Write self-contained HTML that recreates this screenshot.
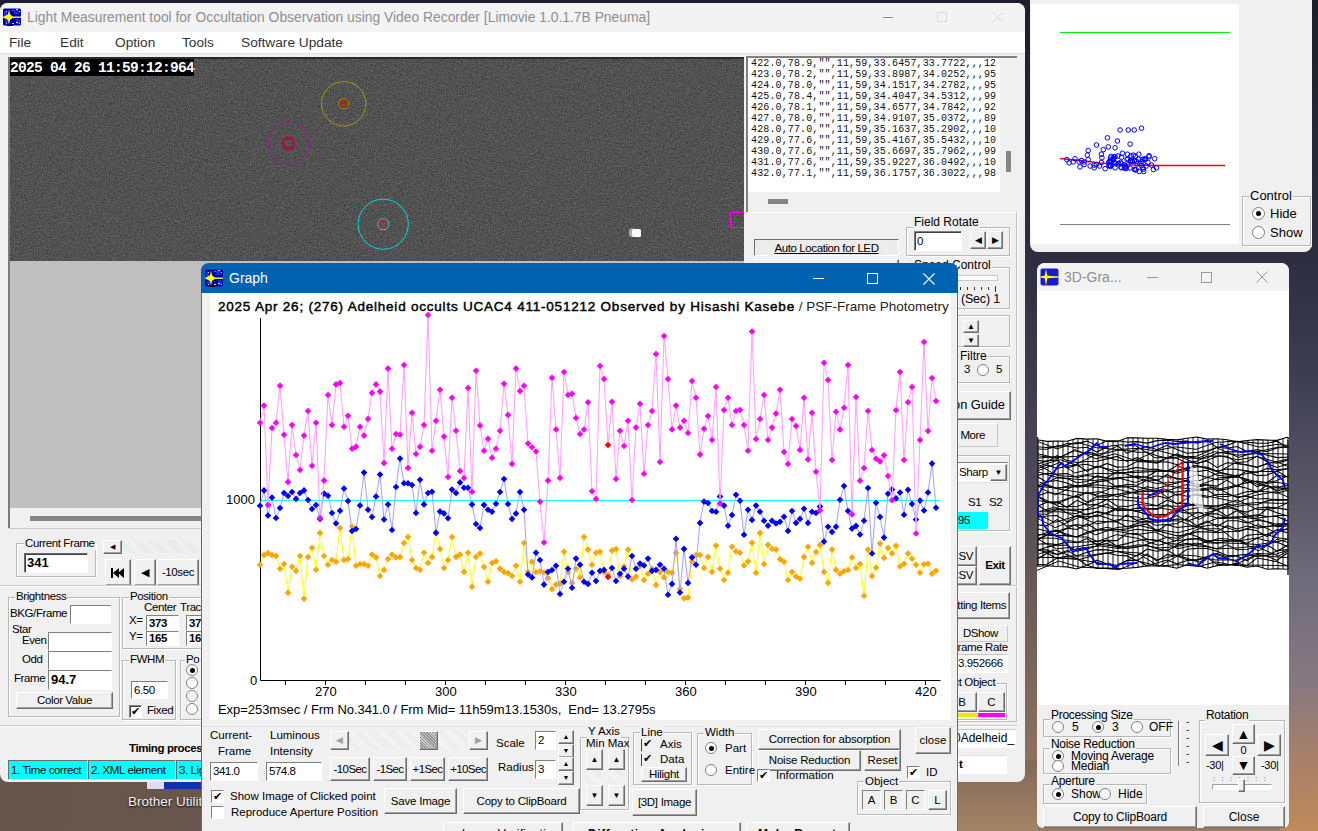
<!DOCTYPE html>
<html><head><meta charset="utf-8">
<style>
*{margin:0;padding:0;box-sizing:border-box}
html,body{width:1318px;height:831px;overflow:hidden}
body{position:relative;font-family:"Liberation Sans",sans-serif;font-size:12px;color:#000;
background:linear-gradient(180deg,#1d1d2b 0%,#2c2c3e 30%,#4a4556 55%,#7a6558 80%,#9a7a60 100%)}
.a{position:absolute}
.win{position:absolute;background:#f0f0f0;overflow:hidden}
.tb{position:absolute;left:0;right:0;top:0;background:#f3f3f3}
.ttl{position:absolute;font-size:14px;color:#8a8a8a;white-space:nowrap}
.grp{position:absolute;border:1px solid #b8b8b8;box-shadow:inset 1px 1px 0 #fff,1px 1px 0 #fff}
.gl{position:absolute;background:#f0f0f0;padding:0 1px;font-size:12px;white-space:nowrap;line-height:13px}
.btn{position:absolute;background:#f0f0f0;border:1px solid;border-color:#fff #6d6d6d #6d6d6d #fff;box-shadow:inset -1px -1px 0 #a0a0a0;text-align:center;white-space:nowrap;font-size:12px}
.ed{position:absolute;background:#fff;border:1px solid;border-color:#808080 #fff #fff #808080;box-shadow:inset 1px 1px 0 #404040;white-space:nowrap;overflow:hidden;padding-left:2px}
.t{position:absolute;white-space:nowrap;line-height:1}
.cb{position:absolute;width:13px;height:13px;background:#fff;border:1px solid;border-color:#808080 #fff #fff #808080;box-shadow:inset 1px 1px 0 #404040}
.rd{position:absolute;width:12px;height:12px;border-radius:50%;background:#fff;border:1px solid #808080}
.rd.on::after{content:"";position:absolute;left:2.5px;top:2.5px;width:5px;height:5px;border-radius:50%;background:#000}
.cyan{background:#00ffff}
</style></head>
<body>
<!-- desktop bits -->
<div class="a" style="left:0;top:770px;width:1040px;height:61px;background:linear-gradient(90deg,#66544c,#6e5a50 50%,#8a7060)"></div>
<div class="a" style="left:958px;top:760px;width:80px;height:71px;background:linear-gradient(180deg,#806858,#a58465)"></div>

<div class="a" style="left:1280px;top:240px;width:38px;height:591px;background:linear-gradient(180deg,#2c2c3e 0px,#3c3a4e 120px,#5a5868 260px,#6c6a7a 330px,#867880 440px,#a88068 520px,#c08a58 591px)"></div>
<div class="a" style="left:1025px;top:0;width:293px;height:263px;background:linear-gradient(180deg,#1e1e2c,#2e2e40)"></div>
<!-- MAIN WINDOW -->
<div class="win" id="main" style="left:0;top:3px;width:1025px;height:779px;border-radius:8px"></div>
<div class="a" style="left:0;top:3px;width:1025px;height:29px;background:#f3f3f3;border-radius:8px 8px 0 0"></div>
<svg class="a" style="left:3px;top:8px" width="19" height="19" viewBox="0 0 19 19"><rect x="0" y="0.5" width="18" height="17" rx="1.5" fill="#0000a8"/><rect x="1" y="3" width="3" height="5" fill="#1a30f0"/><rect x="11" y="2" width="5" height="4" fill="#1028e0"/><rect x="2" y="12" width="4" height="3" fill="#1a30f0"/><rect x="13" y="11" width="4" height="5" fill="#1028e0"/><rect x="3" y="3" width="1" height="1" fill="#ddd"/><rect x="9.5" y="2" width="1" height="1" fill="#ddd"/><rect x="13" y="1" width="2" height="1" fill="#ddd"/><rect x="16" y="3" width="1" height="1" fill="#ddd"/><rect x="3" y="15" width="1" height="1" fill="#ddd"/><rect x="9" y="15" width="2" height="1" fill="#ddd"/><rect x="13" y="14" width="2" height="1" fill="#ddd"/><rect x="16" y="15" width="1" height="1" fill="#ddd"/><rect x="4" y="17" width="6" height="1" fill="#000"/><path d="M6 1.5L7 6.3L9.8 8.4L18 8.6V9.8L9.8 10L7 12L6 16.5L5 12L1 10L0 9.8V8.6L1 8.4L5 6.3Z" fill="#ffff00"/></svg>
<div class="t" style="left:27px;top:11px;font-size:13.85px;color:#8f8f8f">Light Measurement tool for Occultation Observation using Video Recorder [Limovie 1.0.1.7B Pneuma]</div>
<div class="a" style="left:883px;top:17px;width:10px;height:1px;background:#909090"></div>
<div class="a" style="left:937px;top:12px;width:10px;height:10px;border:1px solid #d8d8d8"></div>
<svg class="a" style="left:992px;top:12px" width="11" height="11"><path d="M0.5 0.5L10.5 10.5M10.5 0.5L0.5 10.5" stroke="#dcdcdc" stroke-width="1"/></svg>
<div class="a" style="left:0;top:32px;width:1025px;height:21px;background:#fff"></div>
<div class="t" style="left:9px;top:36px;font-size:13.7px;color:#333">File</div>
<div class="t" style="left:60px;top:36px;font-size:13.7px;color:#333">Edit</div>
<div class="t" style="left:115px;top:36px;font-size:13.7px;color:#333">Option</div>
<div class="t" style="left:182px;top:36px;font-size:13.7px;color:#333">Tools</div>
<div class="t" style="left:241px;top:36px;font-size:13.7px;color:#333">Software Update</div>
<div class="a" style="left:0;top:53px;width:1025px;height:1px;background:#e0e0e0"></div>
<!-- video -->
<svg class="a" style="left:9px;top:57px" width="735" height="205">
 <filter id="nz" x="0" y="0" width="100%" height="100%" color-interpolation-filters="sRGB"><feTurbulence type="fractalNoise" baseFrequency="0.75" numOctaves="2" seed="5"/><feColorMatrix type="matrix" values="0.34 0 0 0 0.15  0.34 0 0 0 0.15  0.34 0 0 0 0.15  0 0 0 0 1"/></filter>
 <rect width="735" height="205" fill="#4e4e4e"/>
 <rect width="735" height="205" fill="#fff" filter="url(#nz)"/>
 <rect x="0" y="0" width="735" height="2" fill="#2a2a2a"/>
 <rect x="1" y="2" width="184" height="17" fill="#000"/>
 <circle cx="334.7" cy="46.8" r="22.2" fill="none" stroke="#a09a00" stroke-width="1"/>
 <circle cx="334.7" cy="46.8" r="5" fill="none" stroke="#a09a00" stroke-width="1"/>
 <circle cx="334.7" cy="46.8" r="3.6" fill="none" stroke="#b01818" stroke-width="1.5"/>
 <circle cx="279.4" cy="86.1" r="20.6" fill="none" stroke="#9a189a" stroke-width="1"/>
 <circle cx="279.4" cy="86.1" r="6.6" fill="none" stroke="#a01880" stroke-width="1"/>
 <circle cx="279.4" cy="86.1" r="5.4" fill="none" stroke="#c00020" stroke-width="1.5"/>
 <circle cx="374.2" cy="167.2" r="25.1" fill="none" stroke="#00d8e0" stroke-width="1"/>
 <circle cx="374.2" cy="167.2" r="5.6" fill="none" stroke="#00d8e0" stroke-width="1"/>
 <circle cx="374.2" cy="167.2" r="4.2" fill="none" stroke="#ff1010" stroke-width="1.3"/>
 <rect x="620" y="171.5" width="7" height="8" rx="2" fill="#aaa"/>
 <rect x="623" y="172" width="9" height="8" rx="1.5" fill="#f8f8f8"/>
 <rect x="721.5" y="155.5" width="14" height="15" fill="none" stroke="#ff00ff" stroke-width="1"/>
</svg>
<div class="t" style="left:10px;top:60px;font:bold 14.5px 'Liberation Mono',monospace;letter-spacing:-0.7px;color:#fff">2025 04 26 11:59:12:964</div>
<!-- gray area below video -->
<div class="a" style="left:9px;top:261px;width:735px;height:247px;background:linear-gradient(90deg,#c0c0c0,#bdbdbd 60%,#c2c2c2)"></div>
<div class="a" style="left:8px;top:57px;width:2px;height:471px;background:#7a7a7a"></div>
<div class="a" style="left:9px;top:528px;width:735px;height:1px;background:#c8c8c8"></div>
<div class="a" style="left:30px;top:516px;width:714px;height:5px;background:#858585"></div>
<!-- log -->
<div class="a" style="left:746px;top:56px;width:271px;height:156px;border-left:2px solid #808080;border-top:2px solid #808080;background:#f0f0f0"></div>
<div class="a" style="left:748px;top:58px;width:252px;height:134px;background:#fff"></div>
<div class="t" style="left:751px;top:57px;padding-top:1px;font:10px/11px 'Liberation Mono',monospace;letter-spacing:0.13px;color:#111;width:246px;overflow:hidden">422.0,78.9,&quot;&quot;,11,59,33.6457,33.7722,,,12<br>423.0,78.2,&quot;&quot;,11,59,33.8987,34.0252,,,95<br>424.0,78.0,&quot;&quot;,11,59,34.1517,34.2782,,,95<br>425.0,78.4,&quot;&quot;,11,59,34.4047,34.5312,,,99<br>426.0,78.1,&quot;&quot;,11,59,34.6577,34.7842,,,92<br>427.0,78.0,&quot;&quot;,11,59,34.9107,35.0372,,,89<br>428.0,77.0,&quot;&quot;,11,59,35.1637,35.2902,,,10<br>429.0,77.6,&quot;&quot;,11,59,35.4167,35.5432,,,10<br>430.0,77.6,&quot;&quot;,11,59,35.6697,35.7962,,,99<br>431.0,77.6,&quot;&quot;,11,59,35.9227,36.0492,,,10<br>432.0,77.1,&quot;&quot;,11,59,36.1757,36.3022,,,98</div>
<div class="a" style="left:1006px;top:151px;width:5px;height:21px;background:#858585"></div>
<div class="a" style="left:768px;top:199px;width:20px;height:5px;background:#858585"></div>
<!-- right control panel -->
<div class="a" style="left:747px;top:212px;width:271px;height:1px;background:#fff"></div>
<div class="a" style="left:1016px;top:212px;width:1px;height:509px;background:#c0c0c0"></div><div class="a" style="left:1017px;top:212px;width:1px;height:509px;background:#fff"></div><div class="a" style="left:900px;top:721px;width:117px;height:1px;background:#c0c0c0"></div>
<div class="btn" style="left:754px;top:239px;width:145px;height:17px;border-color:#6d6d6d #fff #fff #6d6d6d;box-shadow:none;background:repeating-linear-gradient(45deg,#f0f0f0 0 1px,#e8e8e8 1px 2px)"><span style="position:relative;top:1px;text-decoration:underline;font-size:11.5px;letter-spacing:-0.4px">Auto Location for LED</span></div>
<div class="btn" style="left:754px;top:259px;width:145px;height:10px"></div>
<div class="grp" style="left:906px;top:227px;width:104px;height:29px"></div>
<div class="gl" style="left:913px;top:216px">Field Rotate</div>
<div class="ed" style="left:914px;top:231px;width:48px;height:20px;font-size:11.5px;letter-spacing:-0.4px;line-height:18px">0</div>
<div class="btn" style="left:970px;top:231px;width:16px;height:18px;font-size:9px;line-height:16px">&#9664;</div>
<div class="btn" style="left:987px;top:231px;width:16px;height:18px;font-size:9px;line-height:16px">&#9654;</div>
<div class="grp" style="left:906px;top:267px;width:104px;height:42px"></div>
<div class="gl" style="left:913px;top:259px">Speed Control</div>
<div class="a" style="left:918px;top:275px;width:80px;height:6px;background:#fff;border:1px solid #c8c8c8"></div>
<svg class="a" style="left:915px;top:286px" width="85" height="8"><path d="M3.5 1v3M10.5 1v3M17.5 1v3M24.5 1v3M31.5 1v3M38.5 1v3M45.5 1v3M52.5 1v3M59.5 1v3M66.5 1v3M73.5 1v3M80.5 0v6" stroke="#333" stroke-width="1"/></svg>
<div class="t" style="left:961px;top:293px;font-size:12.5px;letter-spacing:-0.2px">(Sec) 1</div>
<div class="grp" style="left:906px;top:315px;width:104px;height:32px"></div>
<div class="btn" style="left:963px;top:320px;width:16px;height:13px;font-size:8px;line-height:11px">&#9650;</div>
<div class="btn" style="left:963px;top:334px;width:16px;height:13px;font-size:8px;line-height:11px">&#9660;</div>
<div class="grp" style="left:906px;top:356px;width:104px;height:27px"></div>
<div class="gl" style="left:959px;top:350px">Filtre</div>
<div class="t" style="left:964px;top:364px;font-size:11.5px;letter-spacing:-0.4px">3</div>
<div class="rd" style="left:977px;top:364px"></div>
<div class="t" style="left:996px;top:364px;font-size:11.5px;letter-spacing:-0.4px">5</div>
<div class="btn" style="left:906px;top:391px;width:105px;height:29px;font-size:12.8px;line-height:26px;text-align:right;padding-right:5px">Location Guide</div>
<div class="btn" style="left:906px;top:423px;width:92px;height:24px;font-size:11.5px;letter-spacing:-0.4px;line-height:22px;text-align:right;padding-right:12px;border-color:#fff #c8c8c8 #c8c8c8 #fff;box-shadow:none">More</div>
<div class="grp" style="left:906px;top:455px;width:104px;height:76px"></div>
<div class="ed" style="left:930px;top:462px;width:78px;height:21px;font-size:11.5px;letter-spacing:-0.4px;line-height:19px;padding-left:28px;box-shadow:none;border-color:#808080 #e0e0e0 #e0e0e0 #808080">Sharp</div>
<div class="btn" style="left:990px;top:464px;width:17px;height:17px;font-size:8px;line-height:15px">&#9660;</div>
<div class="t" style="left:968px;top:497px;font-size:11.5px;letter-spacing:-0.4px">S1</div>
<div class="t" style="left:989px;top:497px;font-size:11.5px;letter-spacing:-0.4px">S2</div>
<div class="a" style="left:930px;top:512px;width:58px;height:17px;background:#00ffff;font-size:11.5px;letter-spacing:-0.4px;line-height:17px;padding-left:28px">95</div>
<div class="btn" style="left:920px;top:546px;width:57px;height:20px;font-size:11.5px;letter-spacing:-0.4px;line-height:18px;text-align:right;padding-right:3px">CSV</div>
<div class="btn" style="left:920px;top:566px;width:57px;height:19px;font-size:11.5px;letter-spacing:-0.4px;line-height:17px;text-align:right;padding-right:3px">CSV</div>
<div class="btn" style="left:979px;top:546px;width:32px;height:39px;font-weight:bold;font-size:11.5px;letter-spacing:-0.4px;line-height:37px">Exit</div>
<div class="btn" style="left:906px;top:592px;width:104px;height:27px;font-size:11.5px;letter-spacing:-0.4px;line-height:25px;text-align:right;padding-right:3px">Setting Items</div>
<div class="btn" style="left:906px;top:625px;width:102px;height:17px;font-size:11.5px;letter-spacing:-0.4px;line-height:15px;text-align:right;padding-right:9px;border-color:#fff #c8c8c8 #c8c8c8 #fff;box-shadow:none">DShow</div>
<div class="t" style="left:951px;top:642px;font-size:11.5px;letter-spacing:-0.4px">Frame Rate</div>
<div class="ed" style="left:906px;top:654px;width:102px;height:19px;font-size:11.5px;letter-spacing:-0.4px;line-height:17px;padding-left:51px;box-shadow:none;border-color:#c8c8c8 #fff #fff #c8c8c8">3.952666</div>
<div class="grp" style="left:906px;top:683px;width:101px;height:37px"></div>
<div class="gl" style="left:931px;top:676px;font-size:11.5px;letter-spacing:-0.4px">Select Object</div>
<div class="btn" style="left:940px;top:692px;width:37px;height:20px;font-size:11.5px;line-height:18px;text-align:right;padding-right:10px">B</div>
<div class="btn" style="left:978px;top:692px;width:27px;height:20px;font-size:11.5px;line-height:18px">C</div>
<div class="a" style="left:940px;top:713px;width:37px;height:4px;background:#e8e800"></div>
<div class="a" style="left:978px;top:713px;width:27px;height:4px;background:#ff00ff"></div>
<div class="ed" style="left:900px;top:729px;width:116px;height:19px;font-size:12px;line-height:17px;padding-left:53px;box-shadow:none;border-color:#c8c8c8 #fff #fff #c8c8c8">0Adelheid_</div>
<div class="ed" style="left:900px;top:755px;width:107px;height:19px;font-weight:bold;font-size:11.5px;letter-spacing:-0.4px;line-height:17px;padding-left:58px;box-shadow:none;border-color:#e0e0e0 #fff #fff #e0e0e0">t</div>
<!-- left bottom -->
<div class="grp" style="left:16px;top:543px;width:80px;height:34px"></div>
<div class="gl" style="left:24px;top:537px;font-size:11.5px;letter-spacing:-0.4px">Current Frame</div>
<div class="ed" style="left:24px;top:553px;width:64px;height:20px;font-weight:bold;font-size:13px;line-height:18px;border-color:#6a6a6a #fff #fff #6a6a6a">341</div>
<div class="a" style="left:103px;top:540px;width:100px;height:13px;background:repeating-linear-gradient(45deg,#f4f4f4 0 1px,#e6e6e6 1px 2px)"></div>
<div class="btn" style="left:103px;top:540px;width:19px;height:14px;font-size:7px;line-height:12px">&#9664;</div>
<div class="btn" style="left:105px;top:559px;width:26px;height:27px"><svg style="position:absolute;left:5px;top:8px" width="14" height="10"><path d="M0 0h2v10h-2z M2 5L8 0V10Z M7 5L13 0V10Z" fill="#000"/></svg></div>
<div class="btn" style="left:134px;top:559px;width:22px;height:27px;font-size:11px;line-height:25px">&#9664;</div>
<div class="btn" style="left:157px;top:559px;width:42px;height:27px;font-size:11.5px;letter-spacing:-0.4px;line-height:25px">-10sec</div>
<div class="a" style="left:0;top:585px;width:1017px;height:1px;background:#c8c8c8"></div>
<div class="a" style="left:0;top:586px;width:1017px;height:1px;background:#fff"></div>
<div class="grp" style="left:8px;top:597px;width:112px;height:120px"></div>
<div class="gl" style="left:15px;top:590px;font-size:11.5px;letter-spacing:-0.4px">Brightness</div>
<div class="t" style="left:10px;top:608px;font-size:11.5px;letter-spacing:-0.4px">BKG/Frame</div>
<div class="ed" style="left:70px;top:605px;width:41px;height:19px;box-shadow:none;border-color:#808080 #fff #fff #808080"></div>
<div class="t" style="left:12px;top:624px;font-size:11.5px;letter-spacing:-0.4px">Star</div>
<div class="t" style="left:22px;top:635px;font-size:11.5px;letter-spacing:-0.4px">Even</div>
<div class="ed" style="left:48px;top:632px;width:64px;height:19px;box-shadow:none;border-color:#808080 #fff #fff #808080"></div>
<div class="t" style="left:22px;top:654px;font-size:11.5px;letter-spacing:-0.4px">Odd</div>
<div class="ed" style="left:48px;top:651px;width:64px;height:19px;box-shadow:none;border-color:#808080 #fff #fff #808080"></div>
<div class="t" style="left:14px;top:673px;font-size:11.5px;letter-spacing:-0.4px">Frame</div>
<div class="ed" style="left:48px;top:670px;width:64px;height:20px;font-weight:bold;font-size:13px;line-height:18px;box-shadow:none;border-color:#808080 #fff #fff #808080">94.7</div>
<div class="btn" style="left:16px;top:692px;width:97px;height:17px;font-size:11.5px;letter-spacing:-0.4px;line-height:15px">Color Value</div>
<div class="grp" style="left:122px;top:597px;width:100px;height:52px"></div>
<div class="gl" style="left:129px;top:590px;font-size:11.5px;letter-spacing:-0.4px">Position</div>
<div class="t" style="left:144px;top:602px;font-size:11.5px;letter-spacing:-0.4px">Center</div>
<div class="t" style="left:180px;top:602px;font-size:11.5px;letter-spacing:-0.4px">Tracking</div>
<div class="t" style="left:129px;top:615px;font-size:11.5px;letter-spacing:-0.4px">X=</div>
<div class="t" style="left:129px;top:631px;font-size:11.5px;letter-spacing:-0.4px">Y=</div>
<div class="ed" style="left:146px;top:615px;width:33px;height:16px;font-weight:bold;font-size:11.5px;letter-spacing:-0.4px;line-height:14px;box-shadow:none;border-color:#808080 #fff #fff #808080">373</div>
<div class="ed" style="left:146px;top:631px;width:33px;height:15px;font-weight:bold;font-size:11.5px;letter-spacing:-0.4px;line-height:13px;box-shadow:none;border-color:#808080 #fff #fff #808080">165</div>
<div class="ed" style="left:186px;top:615px;width:33px;height:16px;font-weight:bold;font-size:11.5px;letter-spacing:-0.4px;line-height:14px;box-shadow:none;border-color:#808080 #fff #fff #808080">373</div>
<div class="ed" style="left:186px;top:631px;width:33px;height:15px;font-weight:bold;font-size:11.5px;letter-spacing:-0.4px;line-height:13px;box-shadow:none;border-color:#808080 #fff #fff #808080">165</div>
<div class="grp" style="left:122px;top:660px;width:54px;height:60px"></div>
<div class="gl" style="left:129px;top:653px;font-size:11.5px;letter-spacing:-0.4px">FWHM</div>
<div class="ed" style="left:131px;top:681px;width:37px;height:18px;font-size:11.5px;letter-spacing:-0.4px;line-height:16px;box-shadow:none;border-color:#808080 #fff #fff #808080">6.50</div>
<div class="cb" style="left:129px;top:705px;font-size:11px;line-height:10px;text-align:center">&#10004;</div>
<div class="t" style="left:147px;top:705px;font-size:11.5px;letter-spacing:-0.4px">Fixed</div>
<div class="grp" style="left:180px;top:660px;width:40px;height:60px"></div>
<div class="gl" style="left:185px;top:653px;font-size:11.5px;letter-spacing:-0.4px">Po</div>
<div class="rd on" style="left:186px;top:664px"></div>
<div class="rd" style="left:186px;top:677px"></div>
<div class="rd" style="left:186px;top:690px"></div>
<div class="rd" style="left:186px;top:703px"></div>
<div class="a" style="left:0;top:725px;width:1017px;height:1px;background:#c8c8c8"></div>
<div class="a" style="left:0;top:726px;width:1017px;height:1px;background:#fff"></div>
<div class="t" style="left:129px;top:743px;font-size:11.5px;letter-spacing:-0.4px;font-weight:bold">Timing process</div>
<div class="btn cyan" style="left:8px;top:760px;width:80px;height:20px;font-size:11.5px;letter-spacing:-0.4px;line-height:18px;text-align:left;padding-left:2px;border-color:#6d6d6d #fff #fff #6d6d6d;box-shadow:none">1. Time correct</div>
<div class="btn cyan" style="left:88px;top:760px;width:88px;height:20px;font-size:11.5px;letter-spacing:-0.4px;line-height:18px;text-align:left;padding-left:2px;border-color:#6d6d6d #fff #fff #6d6d6d;box-shadow:none">2. XML element</div>
<div class="btn cyan" style="left:176px;top:760px;width:60px;height:20px;font-size:11.5px;letter-spacing:-0.4px;line-height:18px;text-align:left;padding-left:2px;border-color:#6d6d6d #fff #fff #6d6d6d;box-shadow:none">3. Light</div>
<div class="t" style="left:128px;top:795px;font-size:13.5px;color:#f0f0f0;text-shadow:0 1px 2px #000">Brother Utilities</div>
<div class="a" style="left:147px;top:782px;width:20px;height:7px;background:#dde"></div>
<div class="a" style="left:164px;top:782px;width:40px;height:7px;background:#1030b0"></div>

<!-- MINI WINDOW -->
<div class="a" style="left:1030px;top:-10px;width:282px;height:262px;background:#f0f0f0;border-radius:8px"></div>
<div class="a" style="left:1031px;top:4px;width:208px;height:240px;background:#fff"></div>
<svg class="a" style="left:1031px;top:4px" width="208" height="240" viewBox="1031 4 208 240"><path d="M1060 32.5H1230" stroke="#00f400" stroke-width="1.2"/><polyline points="1060,158.5 1080,160.5 1100,163 1130,165 1160,165.5 1225,165.5" fill="none" stroke="#ff0000" stroke-width="1.3"/><path d="M1060 224.5H1230" stroke="#808080" stroke-width="1"/><g fill="none" stroke="#0000ff" stroke-width="1"><circle cx="1066.8" cy="159.6" r="2.3"/><circle cx="1069.1" cy="162.8" r="2.3"/><circle cx="1073.2" cy="161.9" r="2.3"/><circle cx="1075.0" cy="158.7" r="2.3"/><circle cx="1079.1" cy="161.9" r="2.3"/><circle cx="1080.0" cy="166.9" r="2.3"/><circle cx="1081.4" cy="160.5" r="2.3"/><circle cx="1084.1" cy="164.6" r="2.3"/><circle cx="1084.1" cy="161.9" r="2.3"/><circle cx="1087.3" cy="155.1" r="2.3"/><circle cx="1088.2" cy="150.5" r="2.3"/><circle cx="1088.2" cy="159.6" r="2.3"/><circle cx="1090.1" cy="166.0" r="2.3"/><circle cx="1094.2" cy="167.8" r="2.3"/><circle cx="1094.2" cy="165.1" r="2.3"/><circle cx="1096.4" cy="145.0" r="2.3"/><circle cx="1096.4" cy="164.6" r="2.3"/><circle cx="1099.6" cy="166.0" r="2.3"/><circle cx="1101.4" cy="154.2" r="2.3"/><circle cx="1101.9" cy="157.8" r="2.3"/><circle cx="1101.4" cy="162.4" r="2.3"/><circle cx="1103.3" cy="149.6" r="2.3"/><circle cx="1105.1" cy="168.7" r="2.3"/><circle cx="1107.4" cy="137.8" r="2.3"/><circle cx="1108.3" cy="146.9" r="2.3"/><circle cx="1108.7" cy="165.5" r="2.3"/><circle cx="1110.6" cy="160.5" r="2.3"/><circle cx="1113.3" cy="159.6" r="2.3"/><circle cx="1114.2" cy="162.4" r="2.3"/><circle cx="1115.1" cy="147.8" r="2.3"/><circle cx="1115.1" cy="167.8" r="2.3"/><circle cx="1117.4" cy="141.0" r="2.3"/><circle cx="1117.8" cy="156.0" r="2.3"/><circle cx="1120.1" cy="130.0" r="2.3"/><circle cx="1120.6" cy="162.4" r="2.3"/><circle cx="1121.5" cy="167.8" r="2.3"/><circle cx="1122.4" cy="153.3" r="2.3"/><circle cx="1124.2" cy="165.1" r="2.3"/><circle cx="1126.0" cy="168.7" r="2.3"/><circle cx="1127.4" cy="154.2" r="2.3"/><circle cx="1127.9" cy="158.7" r="2.3"/><circle cx="1128.3" cy="130.0" r="2.3"/><circle cx="1130.1" cy="144.1" r="2.3"/><circle cx="1130.6" cy="161.4" r="2.3"/><circle cx="1133.3" cy="155.1" r="2.3"/><circle cx="1134.2" cy="130.0" r="2.3"/><circle cx="1134.2" cy="160.5" r="2.3"/><circle cx="1136.1" cy="169.6" r="2.3"/><circle cx="1138.8" cy="154.2" r="2.3"/><circle cx="1139.2" cy="171.5" r="2.3"/><circle cx="1141.5" cy="128.2" r="2.3"/><circle cx="1142.0" cy="161.4" r="2.3"/><circle cx="1142.9" cy="167.8" r="2.3"/><circle cx="1143.8" cy="171.5" r="2.3"/><circle cx="1145.2" cy="158.7" r="2.3"/><circle cx="1146.1" cy="166.0" r="2.3"/><circle cx="1148.0" cy="162.4" r="2.3"/><circle cx="1151.5" cy="165.1" r="2.3"/><circle cx="1153.4" cy="169.6" r="2.3"/><circle cx="1154.7" cy="158.7" r="2.3"/><circle cx="1156.5" cy="167.8" r="2.3"/><circle cx="1121.6" cy="157.3" r="2.3"/><circle cx="1135.3" cy="156.1" r="2.3"/><circle cx="1130.5" cy="160.5" r="2.3"/><circle cx="1110.4" cy="162.6" r="2.3"/><circle cx="1109.6" cy="161.5" r="2.3"/><circle cx="1110.9" cy="156.4" r="2.3"/><circle cx="1125.8" cy="167.4" r="2.3"/><circle cx="1113.2" cy="158.3" r="2.3"/><circle cx="1134.4" cy="169.2" r="2.3"/><circle cx="1132.2" cy="161.0" r="2.3"/><circle cx="1149.0" cy="155.7" r="2.3"/><circle cx="1144.1" cy="159.3" r="2.3"/><circle cx="1114.1" cy="156.8" r="2.3"/><circle cx="1121.0" cy="167.2" r="2.3"/><circle cx="1115.6" cy="163.7" r="2.3"/><circle cx="1134.8" cy="160.6" r="2.3"/><circle cx="1131.0" cy="155.9" r="2.3"/><circle cx="1110.5" cy="158.1" r="2.3"/><circle cx="1136.6" cy="161.4" r="2.3"/><circle cx="1121.2" cy="163.8" r="2.3"/><circle cx="1127.0" cy="159.5" r="2.3"/><circle cx="1141.4" cy="165.5" r="2.3"/><circle cx="1118.3" cy="163.6" r="2.3"/><circle cx="1130.1" cy="168.1" r="2.3"/><circle cx="1138.6" cy="159.3" r="2.3"/><circle cx="1149.2" cy="156.8" r="2.3"/><circle cx="1125.6" cy="166.4" r="2.3"/><circle cx="1114.4" cy="162.3" r="2.3"/><circle cx="1109.6" cy="165.0" r="2.3"/><circle cx="1140.1" cy="163.6" r="2.3"/><circle cx="1144.8" cy="159.7" r="2.3"/><circle cx="1137.2" cy="163.9" r="2.3"/><circle cx="1132.4" cy="161.8" r="2.3"/><circle cx="1143.3" cy="169.2" r="2.3"/><circle cx="1127.9" cy="165.0" r="2.3"/><circle cx="1110.5" cy="165.5" r="2.3"/><circle cx="1135.2" cy="169.9" r="2.3"/><circle cx="1142.5" cy="159.3" r="2.3"/><circle cx="1124.2" cy="165.0" r="2.3"/><circle cx="1108.9" cy="161.9" r="2.3"/><circle cx="1115.1" cy="156.8" r="2.3"/><circle cx="1110.5" cy="166.5" r="2.3"/><circle cx="1113.4" cy="158.7" r="2.3"/><circle cx="1124.4" cy="168.1" r="2.3"/><circle cx="1111.4" cy="161.7" r="2.3"/></g></svg>
<div class="grp" style="left:1242px;top:196px;width:69px;height:50px"></div>
<div class="gl" style="left:1249px;top:189px;font-size:13px">Control</div>
<div class="rd on" style="left:1252px;top:207px;width:13px;height:13px"></div>
<div class="t" style="left:1270px;top:207px;font-size:13px">Hide</div>
<div class="rd" style="left:1252px;top:226px;width:13px;height:13px"></div>
<div class="t" style="left:1270px;top:226px;font-size:13px">Show</div>

<!-- 3D WINDOW -->
<div class="a" style="left:1037px;top:263px;width:252px;height:565px;background:#f0f0f0;border-radius:8px 8px 6px 6px"></div>
<div class="a" style="left:1037px;top:263px;width:252px;height:28px;background:#f3f3f3;border-radius:8px 8px 0 0"></div>
<svg class="a" style="left:1040px;top:268px" width="19" height="19" viewBox="0 0 19 19"><rect x="0.5" y="0.5" width="18" height="17" rx="2" fill="#1a1ad0"/><path d="M6 1 L7.2 7.5 L18 9 L7.2 10.5 L6 18 L4.8 10.5 L0.5 9 L4.8 7.5Z" fill="#ffff00"/><rect x="0.5" y="8.3" width="18" height="1.4" fill="#ffff00"/></svg>
<div class="t" style="left:1064px;top:270px;font-size:14px;color:#8f8f8f">3D-Gra...</div>
<div class="a" style="left:1147px;top:277px;width:11px;height:1px;background:#999"></div>
<div class="a" style="left:1201px;top:272px;width:11px;height:11px;border:1px solid #999"></div>
<svg class="a" style="left:1256px;top:271px" width="12" height="12"><path d="M0.5 0.5L11.5 11.5M11.5 0.5L0.5 11.5" stroke="#999" stroke-width="1"/></svg>
<div class="a" style="left:1037px;top:291px;width:252px;height:414px;background:#fff"></div>
<svg class="a" style="left:1037px;top:291px" width="252" height="414" viewBox="1037 291 252 414"><path d="M1038 439.9V566.3M1043 440.7V565.9M1048 441.4V565.7M1053 441.2V566.2M1058 441.1V566.6M1063 441.2V566.7M1068 441.0V567.1M1073 439.6V568.2M1078 438.5V568.7M1083 438.8V566.8M1088 439.0V565.6M1093 438.9V567.2M1098 439.1V568.4M1103 440.4V568.2M1108 441.5V568.1M1113 441.6V568.3M1118 441.4V568.5M1123 439.4V568.4M1128 437.8V568.2M1133 437.8V567.8M1138 437.9V567.3M1143 438.0V566.6M1148 438.2V566.0M1153 438.2V566.0M1158 438.3V566.0M1163 438.9V566.1M1168 439.5V566.4M1173 439.7V567.5M1178 439.8V568.0M1183 439.0V566.2M1188 438.2V564.9M1193 437.5V565.1M1198 437.2V565.7M1203 438.3V567.1M1208 439.1V567.9M1213 438.9V566.6M1218 438.9V565.5M1223 439.4V565.1M1228 440.0V564.7M1233 441.0V564.6M1238 441.6V564.8M1243 441.0V566.1M1248 440.4V567.0M1253 439.9V566.5M1258 439.6V566.4M1263 439.9V568.0M1268 440.1V569.3M1273 440.3V569.0M1278 440.1V568.9M1283 438.5V569.1M1288 437.7V569.0" stroke="#555" stroke-width="1.4"/><polyline points="1037,439.7 1047,441.4 1057,441.1 1067,441.3 1077,438.4 1087,439.1 1097,438.8 1107,441.4 1117,441.8 1127,437.8 1137,437.9 1147,438.2 1157,438.2 1167,439.4 1177,439.9 1187,438.3 1197,437.0 1207,439.1 1217,438.8 1227,439.8 1237,441.8 1247,440.5 1257,439.6 1267,440.1 1277,440.4 1287,437.3 1297,441.5" fill="none" stroke="#000" stroke-width="1.1"/><polyline points="1037,446.8 1047,447.5 1057,446.9 1067,443.5 1077,443.6 1087,441.1 1097,445.5 1107,440.7 1117,440.8 1127,442.0 1137,441.6 1147,443.1 1157,440.6 1167,440.2 1177,441.5 1187,441.1 1197,443.3 1207,440.4 1217,447.5 1227,445.4 1237,441.4 1247,442.3 1257,443.1 1267,443.3 1277,441.2 1287,447.3 1297,448.5" fill="none" stroke="#000" stroke-width="1.1"/><polyline points="1037,449.0 1047,449.2 1057,445.8 1067,446.0 1077,448.0 1087,447.3 1097,452.1 1107,446.5 1117,445.3 1127,453.1 1137,449.5 1147,446.3 1157,449.7 1167,445.3 1177,449.5 1187,453.3 1197,452.4 1207,450.9 1217,447.3 1227,448.2 1237,446.5 1247,451.6 1257,449.6 1267,451.6 1277,447.9 1287,447.0 1297,451.9" fill="none" stroke="#000" stroke-width="1.1"/><polyline points="1037,458.3 1047,457.2 1057,456.8 1067,456.9 1077,456.2 1087,451.9 1097,454.3 1107,453.0 1117,450.2 1127,450.2 1137,452.3 1147,452.2 1157,455.8 1167,458.0 1177,453.8 1187,457.9 1197,458.3 1207,458.0 1217,453.1 1227,451.9 1237,451.9 1247,451.7 1257,451.7 1267,455.2 1277,457.6 1287,457.1 1297,454.0" fill="none" stroke="#000" stroke-width="1.1"/><polyline points="1037,460.4 1047,461.6 1057,455.6 1067,460.4 1077,462.5 1087,461.5 1097,461.2 1107,458.9 1117,456.4 1127,461.5 1137,457.7 1147,461.6 1157,463.1 1167,458.2 1177,458.3 1187,462.9 1197,461.0 1207,456.3 1217,456.0 1227,456.2 1237,462.5 1247,461.7 1257,456.1 1267,461.8 1277,463.1 1287,460.4 1297,457.8" fill="none" stroke="#000" stroke-width="1.1"/><polyline points="1037,464.4 1047,460.9 1057,459.9 1067,468.0 1077,465.3 1087,464.2 1097,467.6 1107,463.4 1117,467.1 1127,466.7 1137,461.6 1147,461.9 1157,462.3 1167,461.8 1177,464.7 1187,462.0 1197,463.3 1207,460.9 1217,467.4 1227,462.8 1237,463.6 1247,464.7 1257,467.4 1267,463.3 1277,467.5 1287,464.0 1297,464.3" fill="none" stroke="#000" stroke-width="1.1"/><polyline points="1037,469.1 1047,464.9 1057,468.4 1067,466.2 1077,464.7 1087,471.4 1097,466.1 1107,468.7 1117,470.8 1127,469.4 1137,467.4 1147,469.1 1157,469.4 1167,471.3 1177,465.6 1187,469.4 1197,466.8 1207,467.0 1217,471.2 1227,469.0 1237,469.4 1247,471.1 1257,472.4 1267,468.4 1277,469.8 1287,468.9 1297,469.0" fill="none" stroke="#000" stroke-width="1.1"/><polyline points="1037,475.4 1047,473.4 1057,474.1 1067,473.6 1077,477.5 1087,475.5 1097,477.0 1107,477.5 1117,471.8 1127,474.3 1137,477.5 1147,476.7 1157,470.8 1167,470.6 1177,473.3 1187,470.2 1197,471.6 1207,470.2 1217,475.2 1227,476.2 1237,477.1 1247,470.9 1257,475.6 1267,475.1 1277,470.8 1287,477.0 1297,477.7" fill="none" stroke="#000" stroke-width="1.1"/><polyline points="1037,476.3 1047,482.5 1057,477.8 1067,478.6 1077,482.8 1087,481.5 1097,475.9 1107,478.1 1117,478.8 1127,477.3 1137,476.1 1147,477.2 1157,480.6 1167,474.7 1177,479.2 1187,478.2 1197,474.7 1207,477.3 1217,479.7 1227,478.8 1237,475.0 1247,482.8 1257,481.1 1267,482.7 1277,475.4 1287,476.7 1297,474.8" fill="none" stroke="#000" stroke-width="1.1"/><polyline points="1037,485.9 1047,481.7 1057,480.5 1067,482.9 1077,487.1 1087,486.3 1097,481.6 1107,480.7 1117,487.1 1127,484.2 1137,485.3 1147,480.2 1157,479.9 1167,485.2 1177,483.0 1187,480.0 1197,487.3 1207,484.7 1217,486.1 1227,480.1 1237,486.6 1247,480.0 1257,486.6 1267,483.2 1277,482.2 1287,484.0 1297,487.2" fill="none" stroke="#000" stroke-width="1.1"/><polyline points="1037,486.6 1047,485.4 1057,488.7 1067,486.3 1077,485.2 1087,485.7 1097,484.7 1107,486.0 1117,486.9 1127,486.9 1137,490.7 1147,486.7 1157,488.5 1167,485.8 1177,487.2 1187,484.5 1197,486.4 1207,484.4 1217,490.5 1227,488.9 1237,485.9 1247,488.3 1257,492.2 1267,485.2 1277,491.2 1287,487.9 1297,488.5" fill="none" stroke="#000" stroke-width="1.1"/><polyline points="1037,496.2 1047,492.5 1057,493.5 1067,495.0 1077,497.5 1087,492.1 1097,496.2 1107,495.1 1117,494.5 1127,492.6 1137,492.1 1147,489.7 1157,490.3 1167,489.8 1177,495.4 1187,491.3 1197,490.6 1207,489.9 1217,496.3 1227,496.5 1237,494.8 1247,491.6 1257,491.2 1267,491.7 1277,493.1 1287,490.5 1297,492.9" fill="none" stroke="#000" stroke-width="1.1"/><polyline points="1037,496.3 1047,502.2 1057,502.3 1067,498.7 1077,496.2 1087,502.2 1097,496.7 1107,497.1 1117,494.1 1127,497.3 1137,498.1 1147,498.3 1157,495.8 1167,498.3 1177,494.1 1187,496.3 1197,494.9 1207,497.5 1217,494.5 1227,494.3 1237,496.7 1247,496.1 1257,499.0 1267,498.5 1277,500.4 1287,499.6 1297,500.1" fill="none" stroke="#000" stroke-width="1.1"/><polyline points="1037,506.4 1047,502.3 1057,501.7 1067,507.3 1077,500.3 1087,505.1 1097,504.4 1107,499.4 1117,506.0 1127,506.5 1137,504.3 1147,505.2 1157,505.8 1167,500.2 1177,503.4 1187,503.2 1197,506.0 1207,505.8 1217,505.9 1227,503.9 1237,506.5 1247,504.7 1257,504.8 1267,500.9 1277,499.3 1287,500.1 1297,502.0" fill="none" stroke="#000" stroke-width="1.1"/><polyline points="1037,504.8 1047,510.9 1057,508.6 1067,509.2 1077,509.2 1087,509.6 1097,508.0 1107,503.9 1117,510.6 1127,510.2 1137,508.1 1147,508.4 1157,509.4 1167,504.5 1177,510.1 1187,506.0 1197,504.5 1207,506.1 1217,510.0 1227,505.6 1237,510.1 1247,512.1 1257,508.0 1267,507.1 1277,507.9 1287,509.6 1297,510.3" fill="none" stroke="#000" stroke-width="1.1"/><polyline points="1037,514.0 1047,514.2 1057,509.5 1067,510.0 1077,510.9 1087,515.0 1097,511.4 1107,513.6 1117,508.9 1127,509.3 1137,511.1 1147,514.4 1157,514.6 1167,514.5 1177,511.2 1187,513.1 1197,512.7 1207,512.7 1217,509.8 1227,516.3 1237,510.5 1247,517.0 1257,516.7 1267,508.9 1277,512.7 1287,515.7 1297,516.9" fill="none" stroke="#000" stroke-width="1.1"/><polyline points="1037,517.5 1047,516.0 1057,515.5 1067,521.6 1077,515.5 1087,518.6 1097,514.9 1107,518.1 1117,521.7 1127,514.8 1137,520.6 1147,518.0 1157,521.1 1167,519.6 1177,515.6 1187,521.2 1197,517.8 1207,513.9 1217,513.7 1227,517.8 1237,517.5 1247,516.2 1257,514.9 1267,516.6 1277,516.4 1287,520.8 1297,513.7" fill="none" stroke="#000" stroke-width="1.1"/><polyline points="1037,524.9 1047,525.6 1057,519.6 1067,526.4 1077,524.6 1087,526.2 1097,521.0 1107,521.7 1117,521.9 1127,527.0 1137,523.5 1147,521.6 1157,522.2 1167,520.9 1177,519.0 1187,519.5 1197,525.6 1207,521.0 1217,526.5 1227,520.7 1237,520.8 1247,522.9 1257,520.2 1267,521.7 1277,526.6 1287,526.0 1297,525.4" fill="none" stroke="#000" stroke-width="1.1"/><polyline points="1037,528.8 1047,531.2 1057,531.4 1067,528.1 1077,529.5 1087,523.9 1097,529.7 1107,527.3 1117,529.8 1127,528.9 1137,525.9 1147,523.9 1157,531.3 1167,524.6 1177,527.5 1187,526.4 1197,526.0 1207,529.7 1217,531.7 1227,525.7 1237,529.0 1247,526.0 1257,528.2 1267,526.8 1277,524.9 1287,524.9 1297,525.2" fill="none" stroke="#000" stroke-width="1.1"/><polyline points="1037,536.0 1047,532.6 1057,530.2 1067,536.0 1077,536.8 1087,532.2 1097,529.6 1107,530.0 1117,529.2 1127,531.3 1137,529.2 1147,530.4 1157,530.6 1167,533.2 1177,535.9 1187,534.7 1197,531.9 1207,531.9 1217,532.8 1227,531.6 1237,531.2 1247,528.9 1257,530.7 1267,536.5 1277,529.5 1287,532.6 1297,533.7" fill="none" stroke="#000" stroke-width="1.1"/><polyline points="1037,540.5 1047,535.1 1057,535.6 1067,535.4 1077,536.7 1087,537.0 1097,541.3 1107,540.4 1117,540.6 1127,533.5 1137,533.6 1147,539.3 1157,540.8 1167,537.3 1177,538.2 1187,533.3 1197,536.6 1207,541.1 1217,540.2 1227,540.5 1237,541.5 1247,535.4 1257,534.2 1267,534.6 1277,537.7 1287,539.0 1297,541.2" fill="none" stroke="#000" stroke-width="1.1"/><polyline points="1037,544.3 1047,543.6 1057,544.6 1067,542.0 1077,542.8 1087,538.5 1097,544.8 1107,540.2 1117,545.9 1127,543.6 1137,540.8 1147,539.3 1157,540.3 1167,543.5 1177,544.1 1187,539.1 1197,538.8 1207,542.6 1217,543.1 1227,541.5 1237,540.1 1247,543.2 1257,538.3 1267,540.7 1277,542.1 1287,546.3 1297,543.6" fill="none" stroke="#000" stroke-width="1.1"/><polyline points="1037,550.5 1047,547.1 1057,545.1 1067,545.2 1077,551.2 1087,549.0 1097,545.7 1107,543.3 1117,547.3 1127,548.8 1137,546.6 1147,545.3 1157,548.7 1167,550.9 1177,545.0 1187,543.4 1197,545.9 1207,546.6 1217,548.8 1227,544.8 1237,549.8 1247,549.3 1257,547.3 1267,544.8 1277,551.2 1287,545.7 1297,550.0" fill="none" stroke="#000" stroke-width="1.1"/><polyline points="1037,549.9 1047,549.9 1057,554.4 1067,550.5 1077,556.0 1087,552.2 1097,549.6 1107,549.9 1117,551.5 1127,553.6 1137,556.0 1147,549.2 1157,551.3 1167,549.8 1177,556.2 1187,549.2 1197,548.4 1207,548.5 1217,551.3 1227,555.5 1237,555.4 1247,554.2 1257,556.4 1267,555.8 1277,550.8 1287,549.6 1297,555.9" fill="none" stroke="#000" stroke-width="1.1"/><polyline points="1037,559.2 1047,553.2 1057,558.5 1067,556.1 1077,556.0 1087,555.7 1097,554.3 1107,552.9 1117,555.3 1127,555.9 1137,560.9 1147,553.9 1157,561.0 1167,554.6 1177,555.9 1187,559.8 1197,559.8 1207,556.5 1217,553.3 1227,556.9 1237,556.0 1247,560.6 1257,554.5 1267,556.0 1277,560.4 1287,553.2 1297,556.4" fill="none" stroke="#000" stroke-width="1.1"/><polyline points="1037,564.6 1047,564.2 1057,558.1 1067,558.1 1077,558.3 1087,565.5 1097,560.0 1107,564.1 1117,565.3 1127,560.6 1137,560.1 1147,565.8 1157,563.0 1167,560.0 1177,563.8 1187,560.5 1197,560.1 1207,557.8 1217,564.1 1227,565.5 1237,563.1 1247,565.7 1257,558.0 1267,559.8 1277,561.8 1287,565.8 1297,565.8" fill="none" stroke="#000" stroke-width="1.1"/><polyline points="1037,566.3 1047,565.7 1057,566.5 1067,566.9 1077,569.0 1087,565.3 1097,568.4 1107,568.1 1117,568.5 1127,568.3 1137,567.4 1147,566.0 1157,566.0 1167,566.2 1177,568.3 1187,564.8 1197,565.4 1207,568.2 1217,565.6 1227,564.7 1237,564.6 1247,567.2 1257,566.0 1267,569.3 1277,568.8 1287,569.3 1297,565.7" fill="none" stroke="#000" stroke-width="1.1"/><polyline points="1034.5,440.3 1057.0,448.9 1076.7,442.3 1096.5,447.7 1118.0,449.5 1139.1,448.3 1154.7,450.8 1175.8,446.9 1196.2,449.3 1215.2,442.5 1235.5,441.1 1259.3,447.1 1276.0,444.5 1300.0,446.1" fill="none" stroke="#000" stroke-width="1"/><polyline points="1035.4,455.5 1057.9,458.1 1074.6,450.8 1098.9,456.0 1119.5,444.8 1135.8,445.9 1155.1,457.8 1177.5,457.2 1196.2,456.3 1216.7,447.8 1238.7,457.4 1254.6,452.5 1277.7,447.2 1296.2,446.2" fill="none" stroke="#000" stroke-width="1"/><polyline points="1035.2,453.0 1057.6,458.5 1075.2,449.6 1096.0,458.9 1115.1,453.8 1135.2,460.5 1157.3,450.3 1174.6,454.9 1197.3,458.3 1214.5,451.7 1238.2,455.1 1255.7,453.7 1279.7,453.8 1297.4,454.4" fill="none" stroke="#000" stroke-width="1"/><polyline points="1036.5,466.7 1060.0,459.7 1075.2,464.8 1095.2,454.7 1119.4,460.5 1138.9,460.3 1159.3,461.1 1175.0,454.8 1197.3,463.6 1219.5,455.8 1237.7,459.8 1257.0,456.6 1275.7,461.9 1299.6,456.1" fill="none" stroke="#000" stroke-width="1"/><polyline points="1036.9,471.1 1059.8,462.6 1074.8,473.0 1099.9,466.6 1114.3,472.8 1136.3,472.5 1157.7,471.3 1175.0,470.8 1195.3,465.5 1219.1,471.4 1235.1,462.9 1256.4,467.1 1276.3,461.5 1295.5,469.9" fill="none" stroke="#000" stroke-width="1"/><polyline points="1039.4,465.6 1057.4,475.6 1074.2,476.7 1094.7,473.4 1117.3,473.8 1135.8,470.9 1157.5,471.0 1178.0,471.3 1196.6,465.3 1217.7,471.9 1235.4,475.7 1258.7,471.4 1275.1,471.6 1294.6,466.8" fill="none" stroke="#000" stroke-width="1"/><polyline points="1036.6,471.5 1056.7,477.3 1074.2,479.1 1094.5,480.5 1118.7,477.4 1134.3,477.3 1156.3,483.5 1174.8,482.2 1200.0,480.4 1218.9,472.9 1239.9,477.1 1259.7,483.0 1275.0,481.2 1299.6,471.1" fill="none" stroke="#000" stroke-width="1"/><polyline points="1036.1,486.0 1055.0,488.0 1075.6,486.8 1094.9,482.4 1119.5,478.3 1135.6,482.5 1155.9,475.9 1175.1,477.7 1199.6,484.9 1219.4,477.8 1238.7,477.0 1257.2,484.3 1276.2,487.6 1297.3,483.5" fill="none" stroke="#000" stroke-width="1"/><polyline points="1039.3,482.1 1060.0,489.4 1076.4,491.8 1095.6,494.5 1117.5,485.6 1138.6,486.8 1155.1,491.0 1174.3,492.1 1195.5,489.5 1219.9,488.8 1238.0,485.0 1254.0,481.1 1274.9,489.2 1296.6,487.8" fill="none" stroke="#000" stroke-width="1"/><polyline points="1039.4,487.6 1055.4,494.9 1074.1,485.8 1096.1,487.3 1116.1,488.9 1137.5,494.0 1155.2,494.5 1176.8,487.7 1199.6,489.2 1214.9,487.1 1237.8,498.0 1258.7,491.4 1275.6,486.0 1297.9,493.7" fill="none" stroke="#000" stroke-width="1"/><polyline points="1036.1,500.0 1056.7,504.1 1078.4,494.5 1099.4,491.6 1117.2,496.7 1135.4,491.8 1158.7,491.2 1177.3,504.2 1194.9,493.8 1217.6,498.1 1237.8,502.4 1255.0,495.3 1275.8,491.7 1299.3,502.0" fill="none" stroke="#000" stroke-width="1"/><polyline points="1038.3,496.3 1059.1,506.6 1076.8,506.6 1096.7,499.4 1114.6,499.5 1134.2,500.9 1158.5,505.9 1179.1,506.2 1195.6,504.0 1216.6,507.2 1237.1,499.9 1257.9,509.7 1275.3,508.5 1294.1,499.8" fill="none" stroke="#000" stroke-width="1"/><polyline points="1035.4,511.8 1059.7,511.8 1076.0,513.7 1096.0,504.7 1119.4,510.2 1138.2,510.7 1159.9,508.0 1179.0,511.2 1199.1,507.5 1218.3,509.4 1235.8,504.4 1257.7,502.5 1279.5,503.4 1294.2,502.9" fill="none" stroke="#000" stroke-width="1"/><polyline points="1039.6,511.4 1054.9,507.0 1074.2,516.3 1097.8,516.4 1118.4,507.5 1137.5,511.7 1158.9,518.1 1179.3,507.5 1199.2,519.4 1219.7,508.1 1235.2,508.2 1254.2,518.5 1278.9,515.5 1299.0,515.4" fill="none" stroke="#000" stroke-width="1"/><polyline points="1035.7,513.2 1054.6,522.4 1075.2,516.3 1096.5,512.1 1115.5,515.8 1138.3,517.0 1155.9,525.3 1177.0,523.7 1197.7,512.2 1216.5,517.9 1238.6,516.7 1258.2,519.3 1275.3,523.9 1294.5,523.3" fill="none" stroke="#000" stroke-width="1"/><polyline points="1035.0,517.0 1055.2,527.7 1079.9,517.1 1096.9,523.9 1118.8,519.6 1137.0,521.9 1159.0,520.6 1179.7,521.0 1195.3,526.8 1217.0,518.5 1237.8,518.1 1258.7,526.8 1278.7,525.8 1296.1,522.6" fill="none" stroke="#000" stroke-width="1"/><polyline points="1036.4,534.7 1054.5,534.6 1074.2,525.1 1095.6,534.8 1117.0,527.5 1139.3,525.5 1156.8,529.6 1178.5,532.7 1197.9,527.1 1216.0,524.4 1239.1,531.5 1258.5,524.6 1276.6,533.0 1297.5,524.0" fill="none" stroke="#000" stroke-width="1"/><polyline points="1036.8,539.8 1055.4,530.1 1075.8,537.2 1099.1,529.6 1114.9,530.9 1136.0,534.7 1155.0,532.0 1175.1,541.1 1198.4,528.8 1219.8,528.8 1236.3,541.2 1258.8,537.7 1276.6,530.1 1297.8,528.9" fill="none" stroke="#000" stroke-width="1"/><polyline points="1035.2,538.0 1054.2,538.2 1078.7,542.3 1097.0,541.5 1116.8,534.6 1137.6,538.3 1158.4,545.3 1176.6,540.6 1198.5,538.5 1215.4,542.7 1239.3,543.4 1258.2,544.5 1278.1,541.6 1296.7,537.0" fill="none" stroke="#000" stroke-width="1"/><polyline points="1037.8,539.2 1056.5,548.8 1078.3,546.6 1095.5,543.7 1116.7,546.5 1136.5,547.3 1159.6,540.4 1177.9,548.7 1196.3,544.7 1219.8,538.3 1237.3,540.1 1258.7,551.0 1277.1,539.2 1297.4,545.4" fill="none" stroke="#000" stroke-width="1"/><polyline points="1038.3,550.2 1057.8,554.6 1077.1,548.7 1099.7,545.9 1118.1,548.5 1138.6,544.7 1159.9,548.0 1174.3,546.8 1196.4,543.2 1216.5,548.9 1238.2,547.9 1255.6,546.1 1278.4,556.2 1297.2,546.1" fill="none" stroke="#000" stroke-width="1"/><polyline points="1038.8,553.7 1055.3,550.0 1078.7,559.5 1097.8,554.8 1117.4,551.4 1139.8,553.1 1157.8,559.7 1178.9,554.8 1195.8,555.9 1214.8,559.9 1236.1,560.1 1255.6,553.5 1275.5,554.2 1295.1,548.2" fill="none" stroke="#000" stroke-width="1"/><polyline points="1038.3,557.3 1055.5,557.6 1076.9,559.4 1097.8,562.6 1116.2,566.4 1139.1,554.2 1159.0,566.1 1178.7,555.4 1199.0,562.3 1214.1,553.6 1239.7,562.6 1255.5,554.8 1274.9,556.7 1298.7,558.3" fill="none" stroke="#000" stroke-width="1"/><polyline points="1034.9,571.3 1058.8,561.0 1079.3,567.1 1098.7,568.0 1119.4,569.6 1139.0,561.4 1158.2,566.0 1178.5,564.7 1199.3,566.4 1215.6,561.9 1234.8,565.5 1254.4,565.1 1274.9,565.5 1297.0,566.2" fill="none" stroke="#000" stroke-width="1"/><polyline points="1038,516 1038,495 1040,492 1044,485 1053,474 1058,466 1062,463 1064,466 1070,463 1080,456 1090,450 1097,443 1100,447 1108,447" fill="none" stroke="#0000ff" stroke-width="1.8" stroke-linejoin="round"/><polyline points="1125,446 1135,444 1142,446 1150,448 1158,445 1165,443 1175,444 1182,443 1195,442 1213,441" fill="none" stroke="#0000ff" stroke-width="1.8" stroke-linejoin="round"/><polyline points="1220,444 1230,449 1240,452 1250,451 1262,455 1268,462 1272,470 1278,476 1283,480 1285,488" fill="none" stroke="#0000ff" stroke-width="1.8" stroke-linejoin="round"/><polyline points="1285,518 1283,527 1278,532 1275,535 1271,543 1262,547 1258,545 1250,553 1242,558 1235,562" fill="none" stroke="#0000ff" stroke-width="1.8" stroke-linejoin="round"/><polyline points="1229,559 1218,558 1213,554 1210,556 1197,566 1188,563" fill="none" stroke="#0000ff" stroke-width="1.8" stroke-linejoin="round"/><polyline points="1137,563 1120,564 1115,568 1110,564 1097,564 1090,555 1086,548 1080,549 1077,550 1073,552 1070,548 1064,541 1062,538 1056,536 1050,533 1043,524 1042,517 1038,516" fill="none" stroke="#0000ff" stroke-width="1.8" stroke-linejoin="round"/><path d="M1037.5 437V566M1288 440V575" stroke="#222" stroke-width="1.5"/><polyline points="1138,496 1138,505 1146,513 1150,519 1155,520 1170,521 1175,514 1185,505 1188,504 1188,461" fill="none" stroke="#0000ff" stroke-width="1.8"/><polyline points="1147,497 1163,489" fill="none" stroke="#0000ff" stroke-width="1.8"/><polyline points="1152,499 1163,490 1182,461.5" fill="none" stroke="#ff0000" stroke-width="1.3" stroke-dasharray="3 1.5"/><polyline points="1142.3,492.3 1142.3,504 1147,510 1153,515.5 1165,516.5 1175,510 1182,505.7 1182.5,461.5" fill="none" stroke="#ff0000" stroke-width="1.8"/><path d="M1190 465L1197 470L1205 515L1190 500z" fill="#fff" opacity="0.7"/></svg>
<!-- 3D bottom controls -->
<div class="grp" style="left:1043px;top:719px;width:128px;height:18px"></div>
<div class="gl" style="left:1050px;top:709px;font-size:12px;letter-spacing:-0.3px">Processing Size</div>
<div class="rd" style="left:1052px;top:721px"></div><div class="t" style="left:1072px;top:721px;font-size:12px">5</div>
<div class="rd on" style="left:1092px;top:721px"></div><div class="t" style="left:1112px;top:721px;font-size:12px">3</div>
<div class="rd" style="left:1131px;top:721px"></div><div class="t" style="left:1149px;top:721px;font-size:12px">OFF</div>
<div class="grp" style="left:1043px;top:748px;width:128px;height:26px"></div>
<div class="gl" style="left:1050px;top:738px;font-size:12px;letter-spacing:-0.3px">Noise Reduction</div>
<div class="rd on" style="left:1052px;top:750px"></div><div class="t" style="left:1071px;top:750px;font-size:12px;letter-spacing:-0.2px">Moving Average</div>
<div class="rd" style="left:1052px;top:760px"></div><div class="t" style="left:1071px;top:760px;font-size:12px;letter-spacing:-0.2px">Median</div>
<div class="grp" style="left:1043px;top:784px;width:104px;height:20px"></div>
<div class="gl" style="left:1050px;top:775px;font-size:12px;letter-spacing:-0.3px">Aperture</div>
<div class="rd on" style="left:1052px;top:788px"></div><div class="t" style="left:1071px;top:788px;font-size:12px">Show</div>
<div class="rd" style="left:1099px;top:788px"></div><div class="t" style="left:1118px;top:788px;font-size:12px">Hide</div>
<div class="a" style="left:1178px;top:721px;width:3px;height:45px;border-left:1px solid #808080;border-right:1px solid #fff"></div>
<div class="t" style="left:1186px;top:718px;font-size:10px;line-height:8px;color:#333">-<br>-<br>-<br>-<br>-<br>-</div>
<div class="grp" style="left:1199px;top:720px;width:86px;height:83px"></div>
<div class="gl" style="left:1205px;top:709px;font-size:12px;letter-spacing:-0.3px">Rotation</div>
<div class="btn" style="left:1232px;top:724px;width:23px;height:20px;font-size:14px;line-height:18px">&#9650;</div>
<div class="btn" style="left:1205px;top:734px;width:24px;height:22px;font-size:14px;line-height:20px">&#9664;</div>
<div class="btn" style="left:1257px;top:734px;width:24px;height:22px;font-size:14px;line-height:20px">&#9654;</div>
<div class="a" style="left:1232px;top:743px;width:23px;height:15px;font-size:11px;line-height:15px;text-align:center">0</div>
<div class="btn" style="left:1232px;top:756px;width:23px;height:19px;font-size:14px;line-height:17px">&#9660;</div>
<div class="t" style="left:1206px;top:760px;font-size:11px;letter-spacing:-0.3px">-30|</div>
<div class="t" style="left:1261px;top:760px;font-size:11px;letter-spacing:-0.3px">-30|</div>
<div class="t" style="left:1213px;top:775px;font-size:8px;letter-spacing:6.2px;color:#444">:::::::</div>
<div class="a" style="left:1212px;top:784px;width:60px;height:6px;border:1px solid;border-color:#a0a0a0 #fff #fff #a0a0a0;background:#fff"></div>
<div class="btn" style="left:1238px;top:779px;width:7px;height:13px"></div>
<div class="btn" style="left:1043px;top:806px;width:154px;height:22px;font-size:12px;line-height:20px;letter-spacing:-0.2px">Copy to ClipBoard</div>
<div class="btn" style="left:1203px;top:806px;width:82px;height:22px;font-size:12px;line-height:20px">Close</div>

<!-- GRAPH WINDOW -->
<div class="a" style="left:201px;top:263px;width:757px;height:570px;background:#f0f0f0;border-radius:8px 8px 0 0;border:1px solid #2b7bd0;border-top:0"></div>
<div class="a" style="left:201px;top:263px;width:757px;height:30px;background:#0063b1;border-radius:8px 8px 0 0"></div>
<svg class="a" style="left:205px;top:269px" width="19" height="19" viewBox="0 0 19 19"><rect x="0" y="0.5" width="18" height="17" rx="1.5" fill="#0000a8"/><rect x="1" y="3" width="3" height="5" fill="#1a30f0"/><rect x="11" y="2" width="5" height="4" fill="#1028e0"/><rect x="2" y="12" width="4" height="3" fill="#1a30f0"/><rect x="13" y="11" width="4" height="5" fill="#1028e0"/><rect x="3" y="3" width="1" height="1" fill="#ddd"/><rect x="9.5" y="2" width="1" height="1" fill="#ddd"/><rect x="13" y="1" width="2" height="1" fill="#ddd"/><rect x="16" y="3" width="1" height="1" fill="#ddd"/><rect x="3" y="15" width="1" height="1" fill="#ddd"/><rect x="9" y="15" width="2" height="1" fill="#ddd"/><rect x="13" y="14" width="2" height="1" fill="#ddd"/><rect x="16" y="15" width="1" height="1" fill="#ddd"/><rect x="4" y="17" width="6" height="1" fill="#000"/><path d="M6 1.5L7 6.3L9.8 8.4L18 8.6V9.8L9.8 10L7 12L6 16.5L5 12L1 10L0 9.8V8.6L1 8.4L5 6.3Z" fill="#ffff00"/></svg>
<div class="t" style="left:229px;top:271px;font-size:14px;color:#fff">Graph</div>
<div class="a" style="left:813px;top:278px;width:11px;height:1px;background:#fff"></div>
<div class="a" style="left:867px;top:273px;width:11px;height:11px;border:1px solid #fff"></div>
<svg class="a" style="left:923px;top:273px" width="12" height="12"><path d="M0.5 0.5L11.5 11.5M11.5 0.5L0.5 11.5" stroke="#fff" stroke-width="1.1"/></svg>
<svg class="a" style="left:210px;top:293px" width="741" height="427" viewBox="210 293 741 427"><rect x="210" y="293" width="741" height="427" fill="#fff"/><path d="M260.5 318V680.5H940.5" fill="none" stroke="#000" stroke-width="1"/><path d="M285.5 681v4M325.5 681v4M365.5 681v4M405.5 681v4M445.5 681v4M485.5 681v4M525.5 681v4M565.5 681v4M605.5 681v4M645.5 681v4M685.5 681v4M725.5 681v4M765.5 681v4M805.5 681v4M845.5 681v4M885.5 681v4M925.5 681v4" stroke="#000" stroke-width="1"/><path d="M261 500.5H940" stroke="#00ffff" stroke-width="1.2"/><polyline points="260,564.8 264,555.0 268,553.0 272,555.0 276,556.0 280,568.7 284,564.0 288,592.8 292,566.8 296,570.9 300,556.0 304,598.7 308,556.9 312,547.8 316,569.7 320,532.9 324,556.0 328,564.8 332,560.0 336,561.8 340,528.0 344,560.0 348,558.9 352,526.5 356,565.8 360,564.0 364,564.0 368,565.8 372,554.5 376,557.4 380,576.0 384,569.9 388,558.9 392,554.5 396,557.4 400,556.9 404,543.0 408,537.0 412,560.0 416,568.0 420,569.7 424,552.8 428,563.0 432,556.9 436,531.9 440,549.0 444,568.0 448,560.0 452,537.0 456,556.9 460,554.5 464,571.9 468,552.8 472,586.8 476,556.9 480,553.5 484,567.0 488,581.7 492,563.0 496,561.2 500,568.7 504,571.9 508,573.0 512,576.0 516,565.8 520,581.7 524,543.0 528,572.0 532,561.8 536,572.3 540,571.3 544,572.3 548,578.0 552,589.0 556,584.6 560,583.9 564,551.8 568,572.3 572,583.0 576,568.7 580,577.4 584,537.0 588,549.6 592,564.8 596,552.8 600,551.8 604,571.9 608,575.0 612,550.6 616,549.0 620,576.2 624,566.5 628,549.6 632,579.5 636,576.6 640,566.0 644,580.0 648,573.8 652,568.7 656,584.9 660,571.9 664,577.4 668,571.9 672,572.7 676,552.8 680,589.0 684,598.3 688,597.6 692,561.8 696,555.0 700,555.0 704,568.0 708,556.9 712,571.9 716,545.6 720,568.7 724,580.0 728,572.7 732,546.8 736,551.4 740,552.8 744,565.5 748,561.5 752,542.7 756,572.7 760,532.9 764,564.0 768,544.9 772,548.8 776,549.6 780,559.3 784,561.8 788,580.0 792,571.9 796,576.6 800,578.8 804,556.9 808,546.8 812,562.9 816,552.0 820,544.9 824,571.9 828,582.9 832,549.6 836,569.9 840,573.8 844,571.3 848,569.9 852,557.4 856,568.0 860,564.0 864,595.8 868,549.6 872,576.0 876,567.8 880,543.6 884,558.0 888,547.9 892,553.5 896,545.7 900,566.5 904,563.8 908,553.5 912,558.7 916,564.7 920,572.8 924,564.3 928,563.8 932,573.7 936,570.7" fill="none" stroke="#ffff00" stroke-width="1"/><path d="M260 561.5l3.3 3.3l-3.3 3.3l-3.3-3.3zM264 551.7l3.3 3.3l-3.3 3.3l-3.3-3.3zM268 549.7l3.3 3.3l-3.3 3.3l-3.3-3.3zM272 551.7l3.3 3.3l-3.3 3.3l-3.3-3.3zM276 552.7l3.3 3.3l-3.3 3.3l-3.3-3.3zM280 565.4l3.3 3.3l-3.3 3.3l-3.3-3.3zM284 560.7l3.3 3.3l-3.3 3.3l-3.3-3.3zM288 589.5l3.3 3.3l-3.3 3.3l-3.3-3.3zM292 563.5l3.3 3.3l-3.3 3.3l-3.3-3.3zM296 567.6l3.3 3.3l-3.3 3.3l-3.3-3.3zM300 552.7l3.3 3.3l-3.3 3.3l-3.3-3.3zM304 595.4l3.3 3.3l-3.3 3.3l-3.3-3.3zM308 553.6l3.3 3.3l-3.3 3.3l-3.3-3.3zM312 544.5l3.3 3.3l-3.3 3.3l-3.3-3.3zM316 566.4l3.3 3.3l-3.3 3.3l-3.3-3.3zM320 529.6l3.3 3.3l-3.3 3.3l-3.3-3.3zM324 552.7l3.3 3.3l-3.3 3.3l-3.3-3.3zM328 561.5l3.3 3.3l-3.3 3.3l-3.3-3.3zM332 556.7l3.3 3.3l-3.3 3.3l-3.3-3.3zM336 558.5l3.3 3.3l-3.3 3.3l-3.3-3.3zM340 524.7l3.3 3.3l-3.3 3.3l-3.3-3.3zM344 556.7l3.3 3.3l-3.3 3.3l-3.3-3.3zM348 555.6l3.3 3.3l-3.3 3.3l-3.3-3.3zM352 523.2l3.3 3.3l-3.3 3.3l-3.3-3.3zM356 562.5l3.3 3.3l-3.3 3.3l-3.3-3.3zM360 560.7l3.3 3.3l-3.3 3.3l-3.3-3.3zM364 560.7l3.3 3.3l-3.3 3.3l-3.3-3.3zM368 562.5l3.3 3.3l-3.3 3.3l-3.3-3.3zM372 551.2l3.3 3.3l-3.3 3.3l-3.3-3.3zM376 554.1l3.3 3.3l-3.3 3.3l-3.3-3.3zM380 572.7l3.3 3.3l-3.3 3.3l-3.3-3.3zM384 566.6l3.3 3.3l-3.3 3.3l-3.3-3.3zM388 555.6l3.3 3.3l-3.3 3.3l-3.3-3.3zM392 551.2l3.3 3.3l-3.3 3.3l-3.3-3.3zM396 554.1l3.3 3.3l-3.3 3.3l-3.3-3.3zM400 553.6l3.3 3.3l-3.3 3.3l-3.3-3.3zM404 539.7l3.3 3.3l-3.3 3.3l-3.3-3.3zM408 533.7l3.3 3.3l-3.3 3.3l-3.3-3.3zM412 556.7l3.3 3.3l-3.3 3.3l-3.3-3.3zM416 564.7l3.3 3.3l-3.3 3.3l-3.3-3.3zM420 566.4l3.3 3.3l-3.3 3.3l-3.3-3.3zM424 549.5l3.3 3.3l-3.3 3.3l-3.3-3.3zM428 559.7l3.3 3.3l-3.3 3.3l-3.3-3.3zM432 553.6l3.3 3.3l-3.3 3.3l-3.3-3.3zM436 528.6l3.3 3.3l-3.3 3.3l-3.3-3.3zM440 545.7l3.3 3.3l-3.3 3.3l-3.3-3.3zM444 564.7l3.3 3.3l-3.3 3.3l-3.3-3.3zM448 556.7l3.3 3.3l-3.3 3.3l-3.3-3.3zM452 533.7l3.3 3.3l-3.3 3.3l-3.3-3.3zM456 553.6l3.3 3.3l-3.3 3.3l-3.3-3.3zM460 551.2l3.3 3.3l-3.3 3.3l-3.3-3.3zM464 568.6l3.3 3.3l-3.3 3.3l-3.3-3.3zM468 549.5l3.3 3.3l-3.3 3.3l-3.3-3.3zM472 583.5l3.3 3.3l-3.3 3.3l-3.3-3.3zM476 553.6l3.3 3.3l-3.3 3.3l-3.3-3.3zM480 550.2l3.3 3.3l-3.3 3.3l-3.3-3.3zM484 563.7l3.3 3.3l-3.3 3.3l-3.3-3.3zM488 578.4l3.3 3.3l-3.3 3.3l-3.3-3.3zM492 559.7l3.3 3.3l-3.3 3.3l-3.3-3.3zM496 557.9l3.3 3.3l-3.3 3.3l-3.3-3.3zM500 565.4l3.3 3.3l-3.3 3.3l-3.3-3.3zM504 568.6l3.3 3.3l-3.3 3.3l-3.3-3.3zM508 569.7l3.3 3.3l-3.3 3.3l-3.3-3.3zM512 572.7l3.3 3.3l-3.3 3.3l-3.3-3.3zM516 562.5l3.3 3.3l-3.3 3.3l-3.3-3.3zM520 578.4l3.3 3.3l-3.3 3.3l-3.3-3.3zM524 539.7l3.3 3.3l-3.3 3.3l-3.3-3.3zM528 568.7l3.3 3.3l-3.3 3.3l-3.3-3.3zM532 558.5l3.3 3.3l-3.3 3.3l-3.3-3.3zM536 569.0l3.3 3.3l-3.3 3.3l-3.3-3.3zM540 568.0l3.3 3.3l-3.3 3.3l-3.3-3.3zM544 569.0l3.3 3.3l-3.3 3.3l-3.3-3.3zM548 574.7l3.3 3.3l-3.3 3.3l-3.3-3.3zM552 585.7l3.3 3.3l-3.3 3.3l-3.3-3.3zM556 581.3l3.3 3.3l-3.3 3.3l-3.3-3.3zM560 580.6l3.3 3.3l-3.3 3.3l-3.3-3.3zM564 548.5l3.3 3.3l-3.3 3.3l-3.3-3.3zM568 569.0l3.3 3.3l-3.3 3.3l-3.3-3.3zM572 579.7l3.3 3.3l-3.3 3.3l-3.3-3.3zM576 565.4l3.3 3.3l-3.3 3.3l-3.3-3.3zM580 574.1l3.3 3.3l-3.3 3.3l-3.3-3.3zM584 533.7l3.3 3.3l-3.3 3.3l-3.3-3.3zM588 546.3l3.3 3.3l-3.3 3.3l-3.3-3.3zM592 561.5l3.3 3.3l-3.3 3.3l-3.3-3.3zM596 549.5l3.3 3.3l-3.3 3.3l-3.3-3.3zM600 548.5l3.3 3.3l-3.3 3.3l-3.3-3.3zM604 568.6l3.3 3.3l-3.3 3.3l-3.3-3.3zM608 571.7l3.3 3.3l-3.3 3.3l-3.3-3.3zM612 547.3l3.3 3.3l-3.3 3.3l-3.3-3.3zM616 545.7l3.3 3.3l-3.3 3.3l-3.3-3.3zM620 572.9l3.3 3.3l-3.3 3.3l-3.3-3.3zM624 563.2l3.3 3.3l-3.3 3.3l-3.3-3.3zM628 546.3l3.3 3.3l-3.3 3.3l-3.3-3.3zM632 576.2l3.3 3.3l-3.3 3.3l-3.3-3.3zM636 573.3l3.3 3.3l-3.3 3.3l-3.3-3.3zM640 562.7l3.3 3.3l-3.3 3.3l-3.3-3.3zM644 576.7l3.3 3.3l-3.3 3.3l-3.3-3.3zM648 570.5l3.3 3.3l-3.3 3.3l-3.3-3.3zM652 565.4l3.3 3.3l-3.3 3.3l-3.3-3.3zM656 581.6l3.3 3.3l-3.3 3.3l-3.3-3.3zM660 568.6l3.3 3.3l-3.3 3.3l-3.3-3.3zM664 574.1l3.3 3.3l-3.3 3.3l-3.3-3.3zM668 568.6l3.3 3.3l-3.3 3.3l-3.3-3.3zM672 569.4l3.3 3.3l-3.3 3.3l-3.3-3.3zM676 549.5l3.3 3.3l-3.3 3.3l-3.3-3.3zM680 585.7l3.3 3.3l-3.3 3.3l-3.3-3.3zM684 595.0l3.3 3.3l-3.3 3.3l-3.3-3.3zM688 594.3l3.3 3.3l-3.3 3.3l-3.3-3.3zM692 558.5l3.3 3.3l-3.3 3.3l-3.3-3.3zM696 551.7l3.3 3.3l-3.3 3.3l-3.3-3.3zM700 551.7l3.3 3.3l-3.3 3.3l-3.3-3.3zM704 564.7l3.3 3.3l-3.3 3.3l-3.3-3.3zM708 553.6l3.3 3.3l-3.3 3.3l-3.3-3.3zM712 568.6l3.3 3.3l-3.3 3.3l-3.3-3.3zM716 542.3l3.3 3.3l-3.3 3.3l-3.3-3.3zM720 565.4l3.3 3.3l-3.3 3.3l-3.3-3.3zM724 576.7l3.3 3.3l-3.3 3.3l-3.3-3.3zM728 569.4l3.3 3.3l-3.3 3.3l-3.3-3.3zM732 543.5l3.3 3.3l-3.3 3.3l-3.3-3.3zM736 548.1l3.3 3.3l-3.3 3.3l-3.3-3.3zM740 549.5l3.3 3.3l-3.3 3.3l-3.3-3.3zM744 562.2l3.3 3.3l-3.3 3.3l-3.3-3.3zM748 558.2l3.3 3.3l-3.3 3.3l-3.3-3.3zM752 539.4l3.3 3.3l-3.3 3.3l-3.3-3.3zM756 569.4l3.3 3.3l-3.3 3.3l-3.3-3.3zM760 529.6l3.3 3.3l-3.3 3.3l-3.3-3.3zM764 560.7l3.3 3.3l-3.3 3.3l-3.3-3.3zM768 541.6l3.3 3.3l-3.3 3.3l-3.3-3.3zM772 545.5l3.3 3.3l-3.3 3.3l-3.3-3.3zM776 546.3l3.3 3.3l-3.3 3.3l-3.3-3.3zM780 556.0l3.3 3.3l-3.3 3.3l-3.3-3.3zM784 558.5l3.3 3.3l-3.3 3.3l-3.3-3.3zM788 576.7l3.3 3.3l-3.3 3.3l-3.3-3.3zM792 568.6l3.3 3.3l-3.3 3.3l-3.3-3.3zM796 573.3l3.3 3.3l-3.3 3.3l-3.3-3.3zM800 575.5l3.3 3.3l-3.3 3.3l-3.3-3.3zM804 553.6l3.3 3.3l-3.3 3.3l-3.3-3.3zM808 543.5l3.3 3.3l-3.3 3.3l-3.3-3.3zM812 559.6l3.3 3.3l-3.3 3.3l-3.3-3.3zM816 548.7l3.3 3.3l-3.3 3.3l-3.3-3.3zM820 541.6l3.3 3.3l-3.3 3.3l-3.3-3.3zM824 568.6l3.3 3.3l-3.3 3.3l-3.3-3.3zM828 579.6l3.3 3.3l-3.3 3.3l-3.3-3.3zM832 546.3l3.3 3.3l-3.3 3.3l-3.3-3.3zM836 566.6l3.3 3.3l-3.3 3.3l-3.3-3.3zM840 570.5l3.3 3.3l-3.3 3.3l-3.3-3.3zM844 568.0l3.3 3.3l-3.3 3.3l-3.3-3.3zM848 566.6l3.3 3.3l-3.3 3.3l-3.3-3.3zM852 554.1l3.3 3.3l-3.3 3.3l-3.3-3.3zM856 564.7l3.3 3.3l-3.3 3.3l-3.3-3.3zM860 560.7l3.3 3.3l-3.3 3.3l-3.3-3.3zM864 592.5l3.3 3.3l-3.3 3.3l-3.3-3.3zM868 546.3l3.3 3.3l-3.3 3.3l-3.3-3.3zM872 572.7l3.3 3.3l-3.3 3.3l-3.3-3.3zM876 564.5l3.3 3.3l-3.3 3.3l-3.3-3.3zM880 540.3l3.3 3.3l-3.3 3.3l-3.3-3.3zM884 554.7l3.3 3.3l-3.3 3.3l-3.3-3.3zM888 544.6l3.3 3.3l-3.3 3.3l-3.3-3.3zM892 550.2l3.3 3.3l-3.3 3.3l-3.3-3.3zM896 542.4l3.3 3.3l-3.3 3.3l-3.3-3.3zM900 563.2l3.3 3.3l-3.3 3.3l-3.3-3.3zM904 560.5l3.3 3.3l-3.3 3.3l-3.3-3.3zM908 550.2l3.3 3.3l-3.3 3.3l-3.3-3.3zM912 555.4l3.3 3.3l-3.3 3.3l-3.3-3.3zM916 561.4l3.3 3.3l-3.3 3.3l-3.3-3.3zM920 569.5l3.3 3.3l-3.3 3.3l-3.3-3.3zM924 561.0l3.3 3.3l-3.3 3.3l-3.3-3.3zM928 560.5l3.3 3.3l-3.3 3.3l-3.3-3.3zM932 570.4l3.3 3.3l-3.3 3.3l-3.3-3.3zM936 567.4l3.3 3.3l-3.3 3.3l-3.3-3.3z" fill="#ffa500"/><polyline points="260,505.7 264,490.4 268,515.5 272,497.5 276,518.0 280,508.0 284,493.0 288,496.0 292,492.0 296,498.9 300,493.0 304,490.4 308,500.0 312,509.0 316,505.0 320,519.0 324,493.6 328,495.7 332,513.0 336,523.5 340,510.8 344,488.5 348,501.0 352,531.0 356,529.0 360,505.5 364,472.6 368,509.7 372,517.0 376,496.5 380,474.5 384,519.5 388,504.4 392,530.0 396,487.0 400,458.6 404,483.2 408,483.2 412,485.0 416,513.0 420,479.8 424,504.4 428,493.0 432,491.7 436,532.9 440,511.6 444,513.4 448,518.2 452,489.6 456,493.0 460,482.4 464,487.7 468,487.7 472,504.4 476,524.0 480,528.0 484,504.9 488,509.8 492,511.7 496,503.7 500,492.0 504,479.0 508,504.0 512,518.9 516,513.5 520,492.0 524,509.8 528,574.5 532,577.4 536,552.8 540,560.0 544,584.6 548,571.9 552,570.0 556,565.8 560,594.0 564,581.7 568,568.7 572,587.8 576,558.6 580,564.8 584,581.7 588,583.9 592,572.7 596,581.0 600,570.9 604,569.9 608,577.0 612,568.0 616,581.0 620,573.8 624,568.7 628,576.6 632,556.0 636,568.7 640,563.6 644,565.5 648,558.6 652,570.9 656,569.9 660,564.8 664,568.7 668,594.7 672,583.9 676,538.7 680,592.5 684,548.9 688,582.9 692,557.4 696,564.8 700,522.9 704,501.6 708,503.0 712,511.0 716,511.7 720,496.5 724,505.6 728,525.8 732,515.0 736,494.8 740,500.8 744,534.8 748,509.8 752,519.9 756,505.6 760,511.7 764,520.8 768,525.7 772,520.8 776,523.5 780,521.8 784,516.7 788,530.9 792,511.0 796,522.9 800,518.9 804,508.8 808,522.9 812,511.7 816,513.0 820,506.6 824,541.6 828,526.8 832,531.9 836,526.8 840,499.8 844,486.0 848,511.0 852,528.6 856,525.9 860,534.5 864,520.8 868,488.0 872,553.5 876,502.8 880,516.9 884,537.6 888,493.8 892,489.4 896,498.4 900,492.5 904,514.7 908,489.8 912,503.9 916,519.6 920,500.6 924,510.5 928,492.5 932,463.6 936,507.8" fill="none" stroke="#a0a0ff" stroke-width="1"/><path d="M260 502.4l3.3 3.3l-3.3 3.3l-3.3-3.3zM264 487.1l3.3 3.3l-3.3 3.3l-3.3-3.3zM268 512.2l3.3 3.3l-3.3 3.3l-3.3-3.3zM272 494.2l3.3 3.3l-3.3 3.3l-3.3-3.3zM276 514.7l3.3 3.3l-3.3 3.3l-3.3-3.3zM280 504.7l3.3 3.3l-3.3 3.3l-3.3-3.3zM284 489.7l3.3 3.3l-3.3 3.3l-3.3-3.3zM288 492.7l3.3 3.3l-3.3 3.3l-3.3-3.3zM292 488.7l3.3 3.3l-3.3 3.3l-3.3-3.3zM296 495.6l3.3 3.3l-3.3 3.3l-3.3-3.3zM300 489.7l3.3 3.3l-3.3 3.3l-3.3-3.3zM304 487.1l3.3 3.3l-3.3 3.3l-3.3-3.3zM308 496.7l3.3 3.3l-3.3 3.3l-3.3-3.3zM312 505.7l3.3 3.3l-3.3 3.3l-3.3-3.3zM316 501.7l3.3 3.3l-3.3 3.3l-3.3-3.3zM320 515.7l3.3 3.3l-3.3 3.3l-3.3-3.3zM324 490.3l3.3 3.3l-3.3 3.3l-3.3-3.3zM328 492.4l3.3 3.3l-3.3 3.3l-3.3-3.3zM332 509.7l3.3 3.3l-3.3 3.3l-3.3-3.3zM336 520.2l3.3 3.3l-3.3 3.3l-3.3-3.3zM340 507.5l3.3 3.3l-3.3 3.3l-3.3-3.3zM344 485.2l3.3 3.3l-3.3 3.3l-3.3-3.3zM348 497.7l3.3 3.3l-3.3 3.3l-3.3-3.3zM352 527.7l3.3 3.3l-3.3 3.3l-3.3-3.3zM356 525.7l3.3 3.3l-3.3 3.3l-3.3-3.3zM360 502.2l3.3 3.3l-3.3 3.3l-3.3-3.3zM364 469.3l3.3 3.3l-3.3 3.3l-3.3-3.3zM368 506.4l3.3 3.3l-3.3 3.3l-3.3-3.3zM372 513.7l3.3 3.3l-3.3 3.3l-3.3-3.3zM376 493.2l3.3 3.3l-3.3 3.3l-3.3-3.3zM380 471.2l3.3 3.3l-3.3 3.3l-3.3-3.3zM384 516.2l3.3 3.3l-3.3 3.3l-3.3-3.3zM388 501.1l3.3 3.3l-3.3 3.3l-3.3-3.3zM392 526.7l3.3 3.3l-3.3 3.3l-3.3-3.3zM396 483.7l3.3 3.3l-3.3 3.3l-3.3-3.3zM400 455.3l3.3 3.3l-3.3 3.3l-3.3-3.3zM404 479.9l3.3 3.3l-3.3 3.3l-3.3-3.3zM408 479.9l3.3 3.3l-3.3 3.3l-3.3-3.3zM412 481.7l3.3 3.3l-3.3 3.3l-3.3-3.3zM416 509.7l3.3 3.3l-3.3 3.3l-3.3-3.3zM420 476.5l3.3 3.3l-3.3 3.3l-3.3-3.3zM424 501.1l3.3 3.3l-3.3 3.3l-3.3-3.3zM428 489.7l3.3 3.3l-3.3 3.3l-3.3-3.3zM432 488.4l3.3 3.3l-3.3 3.3l-3.3-3.3zM436 529.6l3.3 3.3l-3.3 3.3l-3.3-3.3zM440 508.3l3.3 3.3l-3.3 3.3l-3.3-3.3zM444 510.1l3.3 3.3l-3.3 3.3l-3.3-3.3zM448 514.9l3.3 3.3l-3.3 3.3l-3.3-3.3zM452 486.3l3.3 3.3l-3.3 3.3l-3.3-3.3zM456 489.7l3.3 3.3l-3.3 3.3l-3.3-3.3zM460 479.1l3.3 3.3l-3.3 3.3l-3.3-3.3zM464 484.4l3.3 3.3l-3.3 3.3l-3.3-3.3zM468 484.4l3.3 3.3l-3.3 3.3l-3.3-3.3zM472 501.1l3.3 3.3l-3.3 3.3l-3.3-3.3zM476 520.7l3.3 3.3l-3.3 3.3l-3.3-3.3zM480 524.7l3.3 3.3l-3.3 3.3l-3.3-3.3zM484 501.6l3.3 3.3l-3.3 3.3l-3.3-3.3zM488 506.5l3.3 3.3l-3.3 3.3l-3.3-3.3zM492 508.4l3.3 3.3l-3.3 3.3l-3.3-3.3zM496 500.4l3.3 3.3l-3.3 3.3l-3.3-3.3zM500 488.7l3.3 3.3l-3.3 3.3l-3.3-3.3zM504 475.7l3.3 3.3l-3.3 3.3l-3.3-3.3zM508 500.7l3.3 3.3l-3.3 3.3l-3.3-3.3zM512 515.6l3.3 3.3l-3.3 3.3l-3.3-3.3zM516 510.2l3.3 3.3l-3.3 3.3l-3.3-3.3zM520 488.7l3.3 3.3l-3.3 3.3l-3.3-3.3zM524 506.5l3.3 3.3l-3.3 3.3l-3.3-3.3zM528 571.2l3.3 3.3l-3.3 3.3l-3.3-3.3zM532 574.1l3.3 3.3l-3.3 3.3l-3.3-3.3zM536 549.5l3.3 3.3l-3.3 3.3l-3.3-3.3zM540 556.7l3.3 3.3l-3.3 3.3l-3.3-3.3zM544 581.3l3.3 3.3l-3.3 3.3l-3.3-3.3zM548 568.6l3.3 3.3l-3.3 3.3l-3.3-3.3zM552 566.7l3.3 3.3l-3.3 3.3l-3.3-3.3zM556 562.5l3.3 3.3l-3.3 3.3l-3.3-3.3zM560 590.7l3.3 3.3l-3.3 3.3l-3.3-3.3zM564 578.4l3.3 3.3l-3.3 3.3l-3.3-3.3zM568 565.4l3.3 3.3l-3.3 3.3l-3.3-3.3zM572 584.5l3.3 3.3l-3.3 3.3l-3.3-3.3zM576 555.3l3.3 3.3l-3.3 3.3l-3.3-3.3zM580 561.5l3.3 3.3l-3.3 3.3l-3.3-3.3zM584 578.4l3.3 3.3l-3.3 3.3l-3.3-3.3zM588 580.6l3.3 3.3l-3.3 3.3l-3.3-3.3zM592 569.4l3.3 3.3l-3.3 3.3l-3.3-3.3zM596 577.7l3.3 3.3l-3.3 3.3l-3.3-3.3zM600 567.6l3.3 3.3l-3.3 3.3l-3.3-3.3zM604 566.6l3.3 3.3l-3.3 3.3l-3.3-3.3zM612 564.7l3.3 3.3l-3.3 3.3l-3.3-3.3zM616 577.7l3.3 3.3l-3.3 3.3l-3.3-3.3zM620 570.5l3.3 3.3l-3.3 3.3l-3.3-3.3zM624 565.4l3.3 3.3l-3.3 3.3l-3.3-3.3zM628 573.3l3.3 3.3l-3.3 3.3l-3.3-3.3zM632 552.7l3.3 3.3l-3.3 3.3l-3.3-3.3zM636 565.4l3.3 3.3l-3.3 3.3l-3.3-3.3zM640 560.3l3.3 3.3l-3.3 3.3l-3.3-3.3zM644 562.2l3.3 3.3l-3.3 3.3l-3.3-3.3zM648 555.3l3.3 3.3l-3.3 3.3l-3.3-3.3zM652 567.6l3.3 3.3l-3.3 3.3l-3.3-3.3zM656 566.6l3.3 3.3l-3.3 3.3l-3.3-3.3zM660 561.5l3.3 3.3l-3.3 3.3l-3.3-3.3zM664 565.4l3.3 3.3l-3.3 3.3l-3.3-3.3zM668 591.4l3.3 3.3l-3.3 3.3l-3.3-3.3zM672 580.6l3.3 3.3l-3.3 3.3l-3.3-3.3zM676 535.4l3.3 3.3l-3.3 3.3l-3.3-3.3zM680 589.2l3.3 3.3l-3.3 3.3l-3.3-3.3zM684 545.6l3.3 3.3l-3.3 3.3l-3.3-3.3zM688 579.6l3.3 3.3l-3.3 3.3l-3.3-3.3zM692 554.1l3.3 3.3l-3.3 3.3l-3.3-3.3zM696 561.5l3.3 3.3l-3.3 3.3l-3.3-3.3zM700 519.6l3.3 3.3l-3.3 3.3l-3.3-3.3zM704 498.3l3.3 3.3l-3.3 3.3l-3.3-3.3zM708 499.7l3.3 3.3l-3.3 3.3l-3.3-3.3zM712 507.7l3.3 3.3l-3.3 3.3l-3.3-3.3zM716 508.4l3.3 3.3l-3.3 3.3l-3.3-3.3zM720 493.2l3.3 3.3l-3.3 3.3l-3.3-3.3zM724 502.3l3.3 3.3l-3.3 3.3l-3.3-3.3zM728 522.5l3.3 3.3l-3.3 3.3l-3.3-3.3zM732 511.7l3.3 3.3l-3.3 3.3l-3.3-3.3zM736 491.5l3.3 3.3l-3.3 3.3l-3.3-3.3zM740 497.5l3.3 3.3l-3.3 3.3l-3.3-3.3zM744 531.5l3.3 3.3l-3.3 3.3l-3.3-3.3zM748 506.5l3.3 3.3l-3.3 3.3l-3.3-3.3zM752 516.6l3.3 3.3l-3.3 3.3l-3.3-3.3zM756 502.3l3.3 3.3l-3.3 3.3l-3.3-3.3zM760 508.4l3.3 3.3l-3.3 3.3l-3.3-3.3zM764 517.5l3.3 3.3l-3.3 3.3l-3.3-3.3zM768 522.4l3.3 3.3l-3.3 3.3l-3.3-3.3zM772 517.5l3.3 3.3l-3.3 3.3l-3.3-3.3zM776 520.2l3.3 3.3l-3.3 3.3l-3.3-3.3zM780 518.5l3.3 3.3l-3.3 3.3l-3.3-3.3zM784 513.4l3.3 3.3l-3.3 3.3l-3.3-3.3zM788 527.6l3.3 3.3l-3.3 3.3l-3.3-3.3zM792 507.7l3.3 3.3l-3.3 3.3l-3.3-3.3zM796 519.6l3.3 3.3l-3.3 3.3l-3.3-3.3zM800 515.6l3.3 3.3l-3.3 3.3l-3.3-3.3zM804 505.5l3.3 3.3l-3.3 3.3l-3.3-3.3zM808 519.6l3.3 3.3l-3.3 3.3l-3.3-3.3zM812 508.4l3.3 3.3l-3.3 3.3l-3.3-3.3zM816 509.7l3.3 3.3l-3.3 3.3l-3.3-3.3zM820 503.3l3.3 3.3l-3.3 3.3l-3.3-3.3zM824 538.3l3.3 3.3l-3.3 3.3l-3.3-3.3zM828 523.5l3.3 3.3l-3.3 3.3l-3.3-3.3zM832 528.6l3.3 3.3l-3.3 3.3l-3.3-3.3zM836 523.5l3.3 3.3l-3.3 3.3l-3.3-3.3zM840 496.5l3.3 3.3l-3.3 3.3l-3.3-3.3zM844 482.7l3.3 3.3l-3.3 3.3l-3.3-3.3zM848 507.7l3.3 3.3l-3.3 3.3l-3.3-3.3zM852 525.3l3.3 3.3l-3.3 3.3l-3.3-3.3zM856 522.6l3.3 3.3l-3.3 3.3l-3.3-3.3zM860 531.2l3.3 3.3l-3.3 3.3l-3.3-3.3zM864 517.5l3.3 3.3l-3.3 3.3l-3.3-3.3zM868 484.7l3.3 3.3l-3.3 3.3l-3.3-3.3zM872 550.2l3.3 3.3l-3.3 3.3l-3.3-3.3zM876 499.5l3.3 3.3l-3.3 3.3l-3.3-3.3zM880 513.6l3.3 3.3l-3.3 3.3l-3.3-3.3zM884 534.3l3.3 3.3l-3.3 3.3l-3.3-3.3zM888 490.5l3.3 3.3l-3.3 3.3l-3.3-3.3zM892 486.1l3.3 3.3l-3.3 3.3l-3.3-3.3zM896 495.1l3.3 3.3l-3.3 3.3l-3.3-3.3zM900 489.2l3.3 3.3l-3.3 3.3l-3.3-3.3zM904 511.4l3.3 3.3l-3.3 3.3l-3.3-3.3zM908 486.5l3.3 3.3l-3.3 3.3l-3.3-3.3zM912 500.6l3.3 3.3l-3.3 3.3l-3.3-3.3zM916 516.3l3.3 3.3l-3.3 3.3l-3.3-3.3zM920 497.3l3.3 3.3l-3.3 3.3l-3.3-3.3zM924 507.2l3.3 3.3l-3.3 3.3l-3.3-3.3zM928 489.2l3.3 3.3l-3.3 3.3l-3.3-3.3zM932 460.3l3.3 3.3l-3.3 3.3l-3.3-3.3zM936 504.5l3.3 3.3l-3.3 3.3l-3.3-3.3z" fill="#0000ff"/><polyline points="260,422.8 264,405.6 268,505.0 272,428.0 276,422.8 280,385.8 284,434.8 288,481.9 292,425.0 296,455.0 300,470.0 304,435.6 308,411.0 312,465.7 316,422.8 320,518.0 324,480.6 328,395.0 332,425.0 336,384.4 340,383.0 344,426.8 348,415.7 352,448.8 356,446.7 360,426.8 364,435.6 368,418.9 372,392.9 376,384.4 380,391.6 384,463.1 388,368.6 392,448.8 396,434.0 400,434.8 404,365.0 408,467.9 412,412.8 416,454.0 420,446.7 424,425.0 428,315.0 432,450.7 436,420.7 440,389.7 444,436.6 448,477.0 452,397.7 456,430.8 460,471.0 464,478.0 468,387.9 472,491.7 476,370.7 480,425.5 484,450.7 488,438.7 492,457.8 496,448.8 500,430.8 504,383.7 508,414.9 512,463.9 516,368.6 520,391.0 524,385.8 528,443.5 532,447.2 536,451.5 540,501.8 544,542.5 548,480.6 552,377.8 556,429.5 560,477.9 564,372.0 568,395.0 572,393.7 576,418.0 580,434.0 584,429.5 588,402.2 592,491.2 596,499.0 600,366.0 604,379.0 608,445.0 612,401.7 616,479.0 620,430.8 624,446.0 628,420.7 632,500.0 636,427.6 640,403.8 644,473.7 648,425.0 652,411.0 656,354.0 660,462.0 664,336.0 668,379.0 672,429.5 676,405.6 680,427.6 684,420.7 688,433.0 692,381.0 696,397.7 700,454.6 704,428.7 708,416.0 712,440.0 716,387.0 720,503.6 724,410.0 728,397.7 732,425.0 736,411.0 740,410.0 744,425.0 748,450.7 752,331.5 756,439.0 760,419.0 764,395.0 768,440.0 772,427.6 776,413.6 780,389.7 784,452.0 788,464.0 792,419.0 796,426.0 800,449.9 804,397.7 808,459.4 812,412.8 816,471.8 820,510.4 824,362.8 828,380.0 832,460.0 836,411.8 840,429.6 844,407.8 848,365.0 852,514.4 856,397.0 860,480.7 864,468.0 868,411.0 872,450.0 876,458.7 880,461.4 884,455.3 888,476.0 892,500.3 896,410.2 900,372.0 904,460.0 908,402.3 912,387.0 916,533.5 920,440.0 924,342.0 928,431.0 932,378.0 936,401.0" fill="none" stroke="#ff9cff" stroke-width="1"/><path d="M260 419.5l3.3 3.3l-3.3 3.3l-3.3-3.3zM264 402.3l3.3 3.3l-3.3 3.3l-3.3-3.3zM268 501.7l3.3 3.3l-3.3 3.3l-3.3-3.3zM272 424.7l3.3 3.3l-3.3 3.3l-3.3-3.3zM276 419.5l3.3 3.3l-3.3 3.3l-3.3-3.3zM280 382.5l3.3 3.3l-3.3 3.3l-3.3-3.3zM284 431.5l3.3 3.3l-3.3 3.3l-3.3-3.3zM288 478.6l3.3 3.3l-3.3 3.3l-3.3-3.3zM292 421.7l3.3 3.3l-3.3 3.3l-3.3-3.3zM296 451.7l3.3 3.3l-3.3 3.3l-3.3-3.3zM300 466.7l3.3 3.3l-3.3 3.3l-3.3-3.3zM304 432.3l3.3 3.3l-3.3 3.3l-3.3-3.3zM308 407.7l3.3 3.3l-3.3 3.3l-3.3-3.3zM312 462.4l3.3 3.3l-3.3 3.3l-3.3-3.3zM316 419.5l3.3 3.3l-3.3 3.3l-3.3-3.3zM320 514.7l3.3 3.3l-3.3 3.3l-3.3-3.3zM324 477.3l3.3 3.3l-3.3 3.3l-3.3-3.3zM328 391.7l3.3 3.3l-3.3 3.3l-3.3-3.3zM332 421.7l3.3 3.3l-3.3 3.3l-3.3-3.3zM336 381.1l3.3 3.3l-3.3 3.3l-3.3-3.3zM340 379.7l3.3 3.3l-3.3 3.3l-3.3-3.3zM344 423.5l3.3 3.3l-3.3 3.3l-3.3-3.3zM348 412.4l3.3 3.3l-3.3 3.3l-3.3-3.3zM352 445.5l3.3 3.3l-3.3 3.3l-3.3-3.3zM356 443.4l3.3 3.3l-3.3 3.3l-3.3-3.3zM360 423.5l3.3 3.3l-3.3 3.3l-3.3-3.3zM364 432.3l3.3 3.3l-3.3 3.3l-3.3-3.3zM368 415.6l3.3 3.3l-3.3 3.3l-3.3-3.3zM372 389.6l3.3 3.3l-3.3 3.3l-3.3-3.3zM376 381.1l3.3 3.3l-3.3 3.3l-3.3-3.3zM380 388.3l3.3 3.3l-3.3 3.3l-3.3-3.3zM384 459.8l3.3 3.3l-3.3 3.3l-3.3-3.3zM388 365.3l3.3 3.3l-3.3 3.3l-3.3-3.3zM392 445.5l3.3 3.3l-3.3 3.3l-3.3-3.3zM396 430.7l3.3 3.3l-3.3 3.3l-3.3-3.3zM400 431.5l3.3 3.3l-3.3 3.3l-3.3-3.3zM404 361.7l3.3 3.3l-3.3 3.3l-3.3-3.3zM408 464.6l3.3 3.3l-3.3 3.3l-3.3-3.3zM412 409.5l3.3 3.3l-3.3 3.3l-3.3-3.3zM416 450.7l3.3 3.3l-3.3 3.3l-3.3-3.3zM420 443.4l3.3 3.3l-3.3 3.3l-3.3-3.3zM424 421.7l3.3 3.3l-3.3 3.3l-3.3-3.3zM428 311.7l3.3 3.3l-3.3 3.3l-3.3-3.3zM432 447.4l3.3 3.3l-3.3 3.3l-3.3-3.3zM436 417.4l3.3 3.3l-3.3 3.3l-3.3-3.3zM440 386.4l3.3 3.3l-3.3 3.3l-3.3-3.3zM444 433.3l3.3 3.3l-3.3 3.3l-3.3-3.3zM448 473.7l3.3 3.3l-3.3 3.3l-3.3-3.3zM452 394.4l3.3 3.3l-3.3 3.3l-3.3-3.3zM456 427.5l3.3 3.3l-3.3 3.3l-3.3-3.3zM460 467.7l3.3 3.3l-3.3 3.3l-3.3-3.3zM464 474.7l3.3 3.3l-3.3 3.3l-3.3-3.3zM468 384.6l3.3 3.3l-3.3 3.3l-3.3-3.3zM472 488.4l3.3 3.3l-3.3 3.3l-3.3-3.3zM476 367.4l3.3 3.3l-3.3 3.3l-3.3-3.3zM480 422.2l3.3 3.3l-3.3 3.3l-3.3-3.3zM484 447.4l3.3 3.3l-3.3 3.3l-3.3-3.3zM488 435.4l3.3 3.3l-3.3 3.3l-3.3-3.3zM492 454.5l3.3 3.3l-3.3 3.3l-3.3-3.3zM496 445.5l3.3 3.3l-3.3 3.3l-3.3-3.3zM500 427.5l3.3 3.3l-3.3 3.3l-3.3-3.3zM504 380.4l3.3 3.3l-3.3 3.3l-3.3-3.3zM508 411.6l3.3 3.3l-3.3 3.3l-3.3-3.3zM512 460.6l3.3 3.3l-3.3 3.3l-3.3-3.3zM516 365.3l3.3 3.3l-3.3 3.3l-3.3-3.3zM520 387.7l3.3 3.3l-3.3 3.3l-3.3-3.3zM524 382.5l3.3 3.3l-3.3 3.3l-3.3-3.3zM528 440.2l3.3 3.3l-3.3 3.3l-3.3-3.3zM532 443.9l3.3 3.3l-3.3 3.3l-3.3-3.3zM536 448.2l3.3 3.3l-3.3 3.3l-3.3-3.3zM540 498.5l3.3 3.3l-3.3 3.3l-3.3-3.3zM544 539.2l3.3 3.3l-3.3 3.3l-3.3-3.3zM548 477.3l3.3 3.3l-3.3 3.3l-3.3-3.3zM552 374.5l3.3 3.3l-3.3 3.3l-3.3-3.3zM556 426.2l3.3 3.3l-3.3 3.3l-3.3-3.3zM560 474.6l3.3 3.3l-3.3 3.3l-3.3-3.3zM564 368.7l3.3 3.3l-3.3 3.3l-3.3-3.3zM568 391.7l3.3 3.3l-3.3 3.3l-3.3-3.3zM572 390.4l3.3 3.3l-3.3 3.3l-3.3-3.3zM576 414.7l3.3 3.3l-3.3 3.3l-3.3-3.3zM580 430.7l3.3 3.3l-3.3 3.3l-3.3-3.3zM584 426.2l3.3 3.3l-3.3 3.3l-3.3-3.3zM588 398.9l3.3 3.3l-3.3 3.3l-3.3-3.3zM592 487.9l3.3 3.3l-3.3 3.3l-3.3-3.3zM596 495.7l3.3 3.3l-3.3 3.3l-3.3-3.3zM600 362.7l3.3 3.3l-3.3 3.3l-3.3-3.3zM604 375.7l3.3 3.3l-3.3 3.3l-3.3-3.3zM612 398.4l3.3 3.3l-3.3 3.3l-3.3-3.3zM616 475.7l3.3 3.3l-3.3 3.3l-3.3-3.3zM620 427.5l3.3 3.3l-3.3 3.3l-3.3-3.3zM624 442.7l3.3 3.3l-3.3 3.3l-3.3-3.3zM628 417.4l3.3 3.3l-3.3 3.3l-3.3-3.3zM632 496.7l3.3 3.3l-3.3 3.3l-3.3-3.3zM636 424.3l3.3 3.3l-3.3 3.3l-3.3-3.3zM640 400.5l3.3 3.3l-3.3 3.3l-3.3-3.3zM644 470.4l3.3 3.3l-3.3 3.3l-3.3-3.3zM648 421.7l3.3 3.3l-3.3 3.3l-3.3-3.3zM652 407.7l3.3 3.3l-3.3 3.3l-3.3-3.3zM656 350.7l3.3 3.3l-3.3 3.3l-3.3-3.3zM660 458.7l3.3 3.3l-3.3 3.3l-3.3-3.3zM664 332.7l3.3 3.3l-3.3 3.3l-3.3-3.3zM668 375.7l3.3 3.3l-3.3 3.3l-3.3-3.3zM672 426.2l3.3 3.3l-3.3 3.3l-3.3-3.3zM676 402.3l3.3 3.3l-3.3 3.3l-3.3-3.3zM680 424.3l3.3 3.3l-3.3 3.3l-3.3-3.3zM684 417.4l3.3 3.3l-3.3 3.3l-3.3-3.3zM688 429.7l3.3 3.3l-3.3 3.3l-3.3-3.3zM692 377.7l3.3 3.3l-3.3 3.3l-3.3-3.3zM696 394.4l3.3 3.3l-3.3 3.3l-3.3-3.3zM700 451.3l3.3 3.3l-3.3 3.3l-3.3-3.3zM704 425.4l3.3 3.3l-3.3 3.3l-3.3-3.3zM708 412.7l3.3 3.3l-3.3 3.3l-3.3-3.3zM712 436.7l3.3 3.3l-3.3 3.3l-3.3-3.3zM716 383.7l3.3 3.3l-3.3 3.3l-3.3-3.3zM720 500.3l3.3 3.3l-3.3 3.3l-3.3-3.3zM724 406.7l3.3 3.3l-3.3 3.3l-3.3-3.3zM728 394.4l3.3 3.3l-3.3 3.3l-3.3-3.3zM732 421.7l3.3 3.3l-3.3 3.3l-3.3-3.3zM736 407.7l3.3 3.3l-3.3 3.3l-3.3-3.3zM740 406.7l3.3 3.3l-3.3 3.3l-3.3-3.3zM744 421.7l3.3 3.3l-3.3 3.3l-3.3-3.3zM748 447.4l3.3 3.3l-3.3 3.3l-3.3-3.3zM752 328.2l3.3 3.3l-3.3 3.3l-3.3-3.3zM756 435.7l3.3 3.3l-3.3 3.3l-3.3-3.3zM760 415.7l3.3 3.3l-3.3 3.3l-3.3-3.3zM764 391.7l3.3 3.3l-3.3 3.3l-3.3-3.3zM768 436.7l3.3 3.3l-3.3 3.3l-3.3-3.3zM772 424.3l3.3 3.3l-3.3 3.3l-3.3-3.3zM776 410.3l3.3 3.3l-3.3 3.3l-3.3-3.3zM780 386.4l3.3 3.3l-3.3 3.3l-3.3-3.3zM784 448.7l3.3 3.3l-3.3 3.3l-3.3-3.3zM788 460.7l3.3 3.3l-3.3 3.3l-3.3-3.3zM792 415.7l3.3 3.3l-3.3 3.3l-3.3-3.3zM796 422.7l3.3 3.3l-3.3 3.3l-3.3-3.3zM800 446.6l3.3 3.3l-3.3 3.3l-3.3-3.3zM804 394.4l3.3 3.3l-3.3 3.3l-3.3-3.3zM808 456.1l3.3 3.3l-3.3 3.3l-3.3-3.3zM812 409.5l3.3 3.3l-3.3 3.3l-3.3-3.3zM816 468.5l3.3 3.3l-3.3 3.3l-3.3-3.3zM820 507.1l3.3 3.3l-3.3 3.3l-3.3-3.3zM824 359.5l3.3 3.3l-3.3 3.3l-3.3-3.3zM828 376.7l3.3 3.3l-3.3 3.3l-3.3-3.3zM832 456.7l3.3 3.3l-3.3 3.3l-3.3-3.3zM836 408.5l3.3 3.3l-3.3 3.3l-3.3-3.3zM840 426.3l3.3 3.3l-3.3 3.3l-3.3-3.3zM844 404.5l3.3 3.3l-3.3 3.3l-3.3-3.3zM848 361.7l3.3 3.3l-3.3 3.3l-3.3-3.3zM852 511.1l3.3 3.3l-3.3 3.3l-3.3-3.3zM856 393.7l3.3 3.3l-3.3 3.3l-3.3-3.3zM860 477.4l3.3 3.3l-3.3 3.3l-3.3-3.3zM864 464.7l3.3 3.3l-3.3 3.3l-3.3-3.3zM868 407.7l3.3 3.3l-3.3 3.3l-3.3-3.3zM872 446.7l3.3 3.3l-3.3 3.3l-3.3-3.3zM876 455.4l3.3 3.3l-3.3 3.3l-3.3-3.3zM880 458.1l3.3 3.3l-3.3 3.3l-3.3-3.3zM884 452.0l3.3 3.3l-3.3 3.3l-3.3-3.3zM888 472.7l3.3 3.3l-3.3 3.3l-3.3-3.3zM892 497.0l3.3 3.3l-3.3 3.3l-3.3-3.3zM896 406.9l3.3 3.3l-3.3 3.3l-3.3-3.3zM900 368.7l3.3 3.3l-3.3 3.3l-3.3-3.3zM904 456.7l3.3 3.3l-3.3 3.3l-3.3-3.3zM908 399.0l3.3 3.3l-3.3 3.3l-3.3-3.3zM912 383.7l3.3 3.3l-3.3 3.3l-3.3-3.3zM916 530.2l3.3 3.3l-3.3 3.3l-3.3-3.3zM920 436.7l3.3 3.3l-3.3 3.3l-3.3-3.3zM924 338.7l3.3 3.3l-3.3 3.3l-3.3-3.3zM928 427.7l3.3 3.3l-3.3 3.3l-3.3-3.3zM932 374.7l3.3 3.3l-3.3 3.3l-3.3-3.3zM936 397.7l3.3 3.3l-3.3 3.3l-3.3-3.3z" fill="#ff00ff"/><path d="M608 441.7l3.3 3.3l-3.3 3.3l-3.3-3.3zM608 573.7l3.3 3.3l-3.3 3.3l-3.3-3.3z" fill="#ff0000"/></svg>
<div class="t" style="left:218px;top:299px;font:13.5px 'Liberation Sans',sans-serif;letter-spacing:0.78px;-webkit-text-stroke:0.45px #000;color:#000">2025 Apr 26; (276) Adelheid occults UCAC4 411-051212 Observed by Hisashi Kasebe<span style="letter-spacing:0;-webkit-text-stroke:0;color:#222"> / PSF-Frame Photometry</span></div>
<div class="t" style="left:226px;top:493px;font-size:13px">1000</div>
<div class="t" style="left:250px;top:674px;font-size:13px">0</div>
<div class="t" style="left:315px;top:685px;font-size:13px">270</div>
<div class="t" style="left:435px;top:685px;font-size:13px">300</div>
<div class="t" style="left:555px;top:685px;font-size:13px">330</div>
<div class="t" style="left:675px;top:685px;font-size:13px">360</div>
<div class="t" style="left:795px;top:685px;font-size:13px">390</div>
<div class="t" style="left:915px;top:685px;font-size:13px">420</div>
<div class="t" style="left:218px;top:703px;font-size:13px;letter-spacing:-0.05px">Exp=253msec / Frm No.341.0 / Frm Mid= 11h59m13.1530s,&nbsp; End= 13.2795s</div>
<!-- bottom controls -->
<div class="a" style="left:202px;top:726px;width:755px;height:1px;background:#e4e4e4"></div>
<div class="t" style="left:210px;top:730px;font-size:11.5px">Current-</div>
<div class="t" style="left:218px;top:746px;font-size:11.5px">Frame</div>
<div class="t" style="left:270px;top:730px;font-size:11.5px">Luminous</div>
<div class="t" style="left:270px;top:746px;font-size:11.5px">Intensity</div>
<div class="ed" style="left:210px;top:762px;width:48px;height:19px;font-size:11.5px;line-height:17px;letter-spacing:-0.5px;box-shadow:none">341.0</div>
<div class="ed" style="left:266px;top:762px;width:56px;height:19px;font-size:11.5px;line-height:17px;letter-spacing:-0.5px;box-shadow:none">574.8</div>
<div class="a" style="left:330px;top:731px;width:158px;height:19px;background:repeating-linear-gradient(45deg,#f7f7f7 0 1px,#e8e8e8 1px 2px)"></div>
<div class="btn" style="left:330px;top:731px;width:19px;height:19px;font-size:9px;line-height:17px;color:#a0a0a0">&#9664;</div>
<div class="btn" style="left:469px;top:731px;width:19px;height:19px;font-size:9px;line-height:17px;color:#a0a0a0">&#9654;</div>
<div class="btn" style="left:419px;top:731px;width:19px;height:19px;background:repeating-linear-gradient(45deg,#909090 0 1px,#d0d0d0 1px 2px)"></div>
<div class="t" style="left:496px;top:738px;font-size:11.5px">Scale</div>
<div class="ed" style="left:535px;top:731px;width:21px;height:19px;font-size:11.5px;line-height:17px;box-shadow:none">2</div>
<div class="btn" style="left:558px;top:730px;width:16px;height:14px;font-size:7px;line-height:12px">&#9650;</div>
<div class="btn" style="left:558px;top:744px;width:16px;height:14px;font-size:7px;line-height:12px">&#9660;</div>
<div class="btn" style="left:330px;top:757px;width:40px;height:24px;font-size:11.5px;line-height:22px;letter-spacing:-0.6px">-10Sec</div>
<div class="btn" style="left:373px;top:757px;width:34px;height:24px;font-size:11.5px;line-height:22px;letter-spacing:-0.6px">-1Sec</div>
<div class="btn" style="left:410px;top:757px;width:35px;height:24px;font-size:11.5px;line-height:22px;letter-spacing:-0.6px">+1Sec</div>
<div class="btn" style="left:448px;top:757px;width:40px;height:24px;font-size:11.5px;line-height:22px;letter-spacing:-0.6px">+10Sec</div>
<div class="t" style="left:498px;top:762px;font-size:11.5px">Radius</div>
<div class="ed" style="left:535px;top:760px;width:21px;height:19px;font-size:11.5px;line-height:17px;box-shadow:none">3</div>
<div class="btn" style="left:558px;top:757px;width:16px;height:14px;font-size:7px;line-height:12px">&#9650;</div>
<div class="btn" style="left:558px;top:771px;width:16px;height:14px;font-size:7px;line-height:12px">&#9660;</div>
<div class="cb" style="left:211px;top:790px;font-size:11px;line-height:11px;text-align:center;box-shadow:none">&#10004;</div>
<div class="t" style="left:230px;top:791px;font-size:11.5px">Show Image of Clicked point</div>
<div class="cb" style="left:211px;top:806px;box-shadow:none"></div>
<div class="t" style="left:231px;top:807px;font-size:11.5px">Reproduce Aperture Position</div>
<div class="btn" style="left:384px;top:788px;width:73px;height:26px;font-size:11.5px;line-height:24px;letter-spacing:-0.2px">Save Image</div>
<div class="btn" style="left:463px;top:788px;width:117px;height:26px;font-size:11.5px;line-height:24px;letter-spacing:-0.2px">Copy to ClipBoard</div>
<div class="btn" style="left:443px;top:822px;width:120px;height:14px"></div>
<div class="btn" style="left:573px;top:822px;width:168px;height:14px"></div>
<div class="btn" style="left:746px;top:822px;width:104px;height:14px"></div>
<div class="t" style="left:462px;top:828px;font-size:12px;letter-spacing:0.3px">Lunar Verification</div>
<div class="t" style="left:588px;top:828px;font-size:12px;font-weight:bold;letter-spacing:0.6px">Diffraction Analysis</div>
<div class="t" style="left:758px;top:828px;font-size:12px;font-weight:bold;letter-spacing:0.6px">Make Report</div>
<div class="grp" style="left:580px;top:737px;width:49px;height:73px"></div>
<div class="gl" style="left:587px;top:725px;font-size:11.5px">Y Axis</div>
<div class="t" style="left:586px;top:738px;font-size:11.5px">Min Max</div>
<div class="a" style="left:586px;top:749px;width:17px;height:58px;background:repeating-linear-gradient(45deg,#f7f7f7 0 1px,#e8e8e8 1px 2px)"></div>
<div class="a" style="left:608px;top:749px;width:17px;height:58px;background:repeating-linear-gradient(45deg,#f7f7f7 0 1px,#e8e8e8 1px 2px)"></div>
<div class="btn" style="left:586px;top:749px;width:17px;height:21px;font-size:8px;line-height:19px">&#9650;</div>
<div class="btn" style="left:608px;top:749px;width:17px;height:21px;font-size:8px;line-height:19px">&#9650;</div>
<div class="btn" style="left:586px;top:785px;width:17px;height:21px;font-size:8px;line-height:19px">&#9660;</div>
<div class="btn" style="left:608px;top:785px;width:17px;height:21px;font-size:8px;line-height:19px">&#9660;</div>
<div class="grp" style="left:633px;top:732px;width:59px;height:53px"></div>
<div class="gl" style="left:640px;top:726px;font-size:11.5px">Line</div>
<div class="a" style="left:641px;top:739px;width:1px;height:12px;background:#444"></div>
<div class="t" style="left:643px;top:738px;font-size:11px">&#10004;</div>
<div class="t" style="left:660px;top:739px;font-size:11.5px">Axis</div>
<div class="a" style="left:641px;top:754px;width:1px;height:12px;background:#444"></div>
<div class="t" style="left:643px;top:753px;font-size:11px">&#10004;</div>
<div class="t" style="left:660px;top:754px;font-size:11.5px">Data</div>
<div class="btn" style="left:641px;top:767px;width:46px;height:15px;font-size:11.5px;line-height:13px;letter-spacing:-0.3px">Hilight</div>
<div class="btn" style="left:632px;top:789px;width:65px;height:27px;font-size:11.5px;line-height:25px;letter-spacing:-0.3px">[3D] Image</div>
<div class="grp" style="left:697px;top:733px;width:55px;height:52px"></div>
<div class="gl" style="left:704px;top:726px;font-size:11.5px">Width</div>
<div class="rd on" style="left:705px;top:742px"></div>
<div class="t" style="left:725px;top:743px;font-size:11.5px">Part</div>
<div class="rd" style="left:705px;top:764px"></div>
<div class="t" style="left:725px;top:765px;font-size:11.5px">Entire</div>
<div class="btn" style="left:758px;top:729px;width:143px;height:21px;font-size:11.5px;line-height:19px;letter-spacing:-0.2px">Correction for absorption</div>
<div class="btn" style="left:758px;top:750px;width:103px;height:21px;font-size:11.5px;line-height:19px;letter-spacing:-0.2px">Noise Reduction</div>
<div class="btn" style="left:864px;top:750px;width:37px;height:21px;font-size:11.5px;line-height:19px">Reset</div>
<div class="cb" style="left:757px;top:769px;font-size:11px;line-height:11px;text-align:center;box-shadow:none">&#10004;</div>
<div class="t" style="left:776px;top:770px;font-size:11.5px">Information</div>
<div class="btn" style="left:915px;top:727px;width:36px;height:27px;font-size:11.5px;line-height:25px">close</div>
<div class="grp" style="left:857px;top:781px;width:94px;height:34px"></div>
<div class="gl" style="left:864px;top:775px;font-size:11.5px">Object</div>
<div class="cb" style="left:907px;top:766px;font-size:11px;line-height:11px;text-align:center;box-shadow:none">&#10004;</div>
<div class="t" style="left:926px;top:767px;font-size:11.5px">ID</div>
<div class="btn" style="left:862px;top:790px;width:19px;height:20px;font-size:11.5px;line-height:18px;border-color:#808080 #fff #fff #808080;box-shadow:none">A</div>
<div class="btn" style="left:884px;top:790px;width:19px;height:20px;font-size:11.5px;line-height:18px;border-color:#808080 #fff #fff #808080;box-shadow:none">B</div>
<div class="btn" style="left:906px;top:790px;width:19px;height:20px;font-size:11.5px;line-height:18px;border-color:#808080 #fff #fff #808080;box-shadow:none">C</div>
<div class="btn" style="left:928px;top:790px;width:19px;height:20px;font-size:11.5px;line-height:18px">L</div>
</body></html>
